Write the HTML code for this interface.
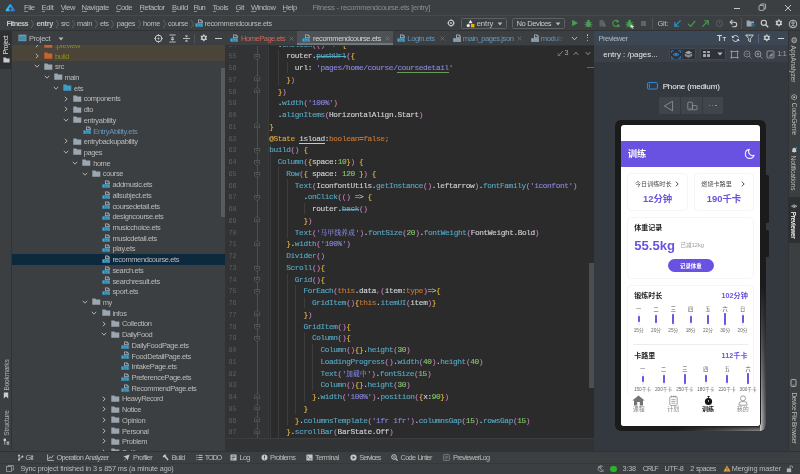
<!DOCTYPE html>
<html lang="en"><head><meta charset="utf-8"><title>Fitness - recommendcourse.ets [entry]</title>
<style>
*{margin:0;padding:0;box-sizing:border-box}
html,body{width:800px;height:474px;overflow:hidden;background:#3c3f41}
body{position:relative;font-family:"Liberation Sans","Noto Sans CJK SC",sans-serif;font-size:7px;color:#bbb}
body div,body span,body svg{position:absolute}
#root{left:0;top:0;width:800px;height:474px;overflow:hidden;will-change:transform}
span{white-space:pre;display:block}
span i{font-style:normal}
.code{font-family:"Liberation Mono","Noto Serif CJK SC",monospace;font-size:7.8px;line-height:11.75px;color:#d0d2d6}
.code i{position:static}
.zh{font-family:"Noto Serif CJK SC",serif;font-size:6.5px;line-height:0}
.code{-webkit-text-stroke:0.12px currentColor}
.cj{font-family:"Liberation Sans","Noto Sans CJK SC",sans-serif}
</style></head>
<body>
<div id="root">
<div style="left:0px;top:0px;width:800px;height:474px;background:#3c3f41;"></div>
<div style="left:0px;top:0px;width:800px;height:15px;background:#3c3f41;"></div>
<svg style="left:5.4px;top:3px;" width="11" height="9" viewBox="0 0 11 9"><defs><linearGradient id="lg" x1="0" y1="0" x2="1" y2="0"><stop offset="0" stop-color="#30c8ea"/><stop offset="0.5" stop-color="#2aa2e6"/><stop offset="1" stop-color="#2b74de"/></linearGradient></defs><path d="M5.3 2 L8.9 7.3 H1.7 Z" fill="none" stroke="url(#lg)" stroke-width="2.1" stroke-linejoin="round"/><path d="M5.3 4.4 L6.5 5.9 H5.8 V8.6 H4.8 V5.9 H4.1 Z" fill="#3c3f41"/></svg>
<span style="left:24px;top:1.90px;font-size:7.6px;color:#bbbbbb;line-height:12px;letter-spacing:-0.437px;">File</span>
<div style="left:24px;top:11.2px;width:3.6px;height:0.5px;background:#8a8a8a"></div>
<span style="left:41.5px;top:1.90px;font-size:7.6px;color:#bbbbbb;line-height:12px;letter-spacing:-0.224px;">Edit</span>
<div style="left:41.5px;top:11.2px;width:3.6px;height:0.5px;background:#8a8a8a"></div>
<span style="left:60.7px;top:1.90px;font-size:7.6px;color:#bbbbbb;line-height:12px;letter-spacing:-0.509px;">View</span>
<div style="left:60.7px;top:11.2px;width:3.6px;height:0.5px;background:#8a8a8a"></div>
<span style="left:81.5px;top:1.90px;font-size:7.6px;color:#bbbbbb;line-height:12px;letter-spacing:-0.312px;">Navigate</span>
<div style="left:81.5px;top:11.2px;width:5px;height:0.5px;background:#8a8a8a"></div>
<span style="left:116px;top:1.90px;font-size:7.6px;color:#bbbbbb;line-height:12px;letter-spacing:-0.542px;">Code</span>
<div style="left:116px;top:11.2px;width:3.6px;height:0.5px;background:#8a8a8a"></div>
<span style="left:139.5px;top:1.90px;font-size:7.6px;color:#bbbbbb;line-height:12px;letter-spacing:-0.440px;">Refactor</span>
<div style="left:139.5px;top:11.2px;width:3.6px;height:0.5px;background:#8a8a8a"></div>
<span style="left:172px;top:1.90px;font-size:7.6px;color:#bbbbbb;line-height:12px;letter-spacing:-0.180px;">Build</span>
<div style="left:172px;top:11.2px;width:3.6px;height:0.5px;background:#8a8a8a"></div>
<span style="left:193.5px;top:1.90px;font-size:7.6px;color:#bbbbbb;line-height:12px;letter-spacing:-0.814px;">Run</span>
<div style="left:193.5px;top:11.2px;width:3.6px;height:0.5px;background:#8a8a8a"></div>
<span style="left:212.5px;top:1.90px;font-size:7.6px;color:#bbbbbb;line-height:12px;letter-spacing:-0.448px;">Tools</span>
<div style="left:212.5px;top:11.2px;width:3.6px;height:0.5px;background:#8a8a8a"></div>
<span style="left:235.5px;top:1.90px;font-size:7.6px;color:#bbbbbb;line-height:12px;letter-spacing:-0.404px;">Git</span>
<div style="left:235.5px;top:11.2px;width:3.6px;height:0.5px;background:#8a8a8a"></div>
<span style="left:251px;top:1.90px;font-size:7.6px;color:#bbbbbb;line-height:12px;letter-spacing:-0.422px;">Window</span>
<div style="left:251px;top:11.2px;width:5px;height:0.5px;background:#8a8a8a"></div>
<span style="left:282.5px;top:1.90px;font-size:7.6px;color:#bbbbbb;line-height:12px;letter-spacing:-0.283px;">Help</span>
<div style="left:282.5px;top:11.2px;width:3.6px;height:0.5px;background:#8a8a8a"></div>
<span style="left:312.5px;top:1.90px;font-size:7.6px;color:#8a8c8e;line-height:12px;letter-spacing:-0.358px;word-spacing:0.358px;">Fitness - recommendcourse.ets [entry]</span>
<div style="left:734px;top:7.5px;width:6px;height:0.8px;background:#c8c8c8;"></div>
<svg style="left:758px;top:3px;" width="9" height="9" viewBox="0 0 9 9"><rect x="1" y="2.4" width="5" height="5" rx="1" fill="none" stroke="#c8c8c8" stroke-width="0.8"/><path d="M2.6 2.4 V1.6 Q2.6 1 3.2 1 H7 Q7.6 1 7.6 1.6 V5.4 Q7.6 6 7 6 H6" fill="none" stroke="#c8c8c8" stroke-width="0.8"/></svg>
<svg style="left:783.5px;top:3.5px;" width="8" height="8" viewBox="0 0 8 8"><path d="M1 1 L7 7 M7 1 L1 7" stroke="#d0d0d0" stroke-width="0.9" fill="none"/></svg>
<div style="left:0px;top:15px;width:800px;height:15.5px;background:#3c3f41;"></div>
<div style="left:0px;top:14.5px;width:800px;height:0.8px;background:#474a4c;"></div>
<div style="left:0px;top:30.2px;width:800px;height:0.8px;background:#323232;"></div>
<span style="left:6.5px;top:17.90px;font-size:7.4px;color:#c4c4c4;line-height:12px;font-weight:bold;letter-spacing:-0.630px;">Fitness</span>
<span style="left:36.5px;top:17.90px;font-size:7.4px;color:#c4c4c4;line-height:12px;font-weight:bold;letter-spacing:-0.319px;">entry</span>
<span style="left:61px;top:17.90px;font-size:7.4px;color:#bbbbbb;line-height:12px;letter-spacing:-0.621px;">src</span>
<span style="left:77px;top:17.90px;font-size:7.4px;color:#bbbbbb;line-height:12px;letter-spacing:-0.260px;">main</span>
<span style="left:100px;top:17.90px;font-size:7.4px;color:#bbbbbb;line-height:12px;letter-spacing:-0.457px;">ets</span>
<span style="left:116.7px;top:17.90px;font-size:7.4px;color:#bbbbbb;line-height:12px;letter-spacing:-0.372px;">pages</span>
<span style="left:143px;top:17.90px;font-size:7.4px;color:#bbbbbb;line-height:12px;letter-spacing:-0.378px;">home</span>
<span style="left:168px;top:17.90px;font-size:7.4px;color:#bbbbbb;line-height:12px;letter-spacing:-0.368px;">course</span>
<svg style="left:29.5px;top:18.5px;" width="5" height="10" viewBox="0 0 5 10"><path d="M1.2 1 L3.6 5 L1.2 9" stroke="#787b7d" stroke-width="0.55" fill="none"/></svg>
<svg style="left:55px;top:18.5px;" width="5" height="10" viewBox="0 0 5 10"><path d="M1.2 1 L3.6 5 L1.2 9" stroke="#787b7d" stroke-width="0.55" fill="none"/></svg>
<svg style="left:71px;top:18.5px;" width="5" height="10" viewBox="0 0 5 10"><path d="M1.2 1 L3.6 5 L1.2 9" stroke="#787b7d" stroke-width="0.55" fill="none"/></svg>
<svg style="left:94px;top:18.5px;" width="5" height="10" viewBox="0 0 5 10"><path d="M1.2 1 L3.6 5 L1.2 9" stroke="#787b7d" stroke-width="0.55" fill="none"/></svg>
<svg style="left:110px;top:18.5px;" width="5" height="10" viewBox="0 0 5 10"><path d="M1.2 1 L3.6 5 L1.2 9" stroke="#787b7d" stroke-width="0.55" fill="none"/></svg>
<svg style="left:137px;top:18.5px;" width="5" height="10" viewBox="0 0 5 10"><path d="M1.2 1 L3.6 5 L1.2 9" stroke="#787b7d" stroke-width="0.55" fill="none"/></svg>
<svg style="left:162px;top:18.5px;" width="5" height="10" viewBox="0 0 5 10"><path d="M1.2 1 L3.6 5 L1.2 9" stroke="#787b7d" stroke-width="0.55" fill="none"/></svg>
<svg style="left:190px;top:18.5px;" width="5" height="10" viewBox="0 0 5 10"><path d="M1.2 1 L3.6 5 L1.2 9" stroke="#787b7d" stroke-width="0.55" fill="none"/></svg>
<span style="left:204.5px;top:17.90px;font-size:7.4px;color:#bbbbbb;line-height:12px;letter-spacing:-0.300px;">recommendcourse.ets</span>
<svg style="left:447.2px;top:19.4px;" width="8" height="8" viewBox="0 0 9 9"><circle cx="4.5" cy="4.5" r="3" fill="none" stroke="#c9c9c9" stroke-width="1.2"/><circle cx="4.5" cy="4.5" r="1" fill="#c9c9c9"/><path d="M4.5 0.3V2 M4.5 7V8.7 M0.3 4.5H2 M7 4.5H8.7" stroke="#c9c9c9" stroke-width="0.9"/></svg>
<div style="left:461.4px;top:17.5px;width:45.4px;height:11.2px;border:0.8px solid #5e6163;border-radius:1.6px;background:#3c3f41"></div>
<svg style="left:465.5px;top:18.6px;" width="9" height="9" viewBox="0 0 9 9"><path d="M4.5 0.8 L6.6 4.2 H2.4 Z" fill="#e8e8e8"/><circle cx="2.3" cy="6.6" r="1.7" fill="#e8e8e8"/><rect x="5" y="5" width="3.4" height="3.4" fill="#f0b400"/></svg>
<span style="left:476.7px;top:17.90px;font-size:7.6px;color:#c8c8c8;line-height:12px;letter-spacing:-0.039px;">entry</span>
<svg style="left:496.5px;top:21.6px;" width="6" height="4" viewBox="0 0 6 4"><path d="M0.6 0.6 H5.4 L3 3.6 Z" fill="#b8b8b8"/></svg>
<div style="left:511.6px;top:17.5px;width:53.1px;height:11.2px;border:0.8px solid #5e6163;border-radius:1.6px;background:#3c3f41"></div>
<span style="left:516.5px;top:17.90px;font-size:7.6px;color:#c8c8c8;line-height:12px;letter-spacing:-0.484px;word-spacing:0.484px;">No Devices</span>
<svg style="left:554.5px;top:21.6px;" width="6" height="4" viewBox="0 0 6 4"><path d="M0.6 0.6 H5.4 L3 3.6 Z" fill="#b8b8b8"/></svg>
<svg style="left:570.5px;top:19.3px;" width="8" height="8" viewBox="0 0 8 8"><path d="M1.2 0.8 L7 4 L1.2 7.2 Z" fill="#499c54"/></svg>
<svg style="left:583.5px;top:18.8px;" width="9" height="9" viewBox="0 0 9 9"><ellipse cx="4.5" cy="5.2" rx="2.4" ry="3" fill="#499c54"/><circle cx="4.5" cy="2" r="1.3" fill="#499c54"/><path d="M0.8 3.2 L2.4 4.2 M8.2 3.2 L6.6 4.2 M0.6 5.6 H2.2 M8.4 5.6 H6.8 M1 8.2 L2.4 7 M8 8.2 L6.6 7" stroke="#499c54" stroke-width="0.8"/></svg>
<svg style="left:597.5px;top:19px;" width="9" height="9" viewBox="0 0 9 9"><path d="M1.5 1 H5.5 V3 H7 V6 H5 V7.5 H1.5 Z" fill="#5e6163"/><path d="M5.5 5 L8.3 6.6 L5.5 8.2 Z" fill="#6e7173"/></svg>
<svg style="left:610.5px;top:19px;" width="10" height="9" viewBox="0 0 10 9"><path d="M6.8 2.2 A3 3 0 1 0 7.6 5.4" fill="none" stroke="#499c54" stroke-width="1.1"/><path d="M5.6 0.4 L8.4 2.4 L5.6 4 Z" fill="#499c54"/><path d="M6.5 5.2 L9.5 6.9 L6.5 8.6 Z" fill="#499c54"/></svg>
<svg style="left:624.5px;top:18.8px;" width="9" height="9" viewBox="0 0 9 9"><ellipse cx="4.5" cy="5.2" rx="2.4" ry="3" fill="#499c54"/><circle cx="4.5" cy="2" r="1.3" fill="#499c54"/><path d="M0.8 3.2 L2.4 4.2 M8.2 3.2 L6.6 4.2 M0.6 5.6 H2.2 M8.4 5.6 H6.8 M1 8.2 L2.4 7 M8 8.2 L6.6 7" stroke="#499c54" stroke-width="0.8"/></svg>
<svg style="left:630px;top:24px;" width="5" height="5" viewBox="0 0 5 5"><path d="M0.5 0.5 L4.5 2.5 L2.6 2.9 L3.6 4.6 L2.8 4.9 L1.9 3.2 L0.8 4.4 Z" fill="#e0e0e0"/></svg>
<div style="left:641px;top:21px;width:5.4px;height:5.4px;background:#616466;"></div>
<div style="left:652.3px;top:17.5px;width:0.7px;height:11.5px;background:#515456;"></div>
<span style="left:657.5px;top:17.80px;font-size:7.5px;color:#bbbbbb;line-height:12px;letter-spacing:-0.292px;">Git:</span>
<svg style="left:672.5px;top:18.8px;" width="9" height="9" viewBox="0 0 9 9"><path d="M7.6 1.4 L2 7 M1.8 3 V7.2 H6" stroke="#3592c4" stroke-width="1.1" fill="none"/></svg>
<svg style="left:686.5px;top:18.8px;" width="9" height="9" viewBox="0 0 9 9"><path d="M1 4.8 L3.6 7.4 L8.2 1.8" stroke="#499c54" stroke-width="1.2" fill="none"/></svg>
<svg style="left:700.5px;top:18.8px;" width="9" height="9" viewBox="0 0 9 9"><path d="M1.4 7.6 L7 2 M3 1.8 H7.2 V6" stroke="#499c54" stroke-width="1.1" fill="none"/></svg>
<svg style="left:714.5px;top:18.8px;" width="9" height="9" viewBox="0 0 9 9"><circle cx="4.5" cy="4.5" r="3.2" fill="none" stroke="#5e6163" stroke-width="0.9"/><path d="M4.5 2.4 V4.6 L6 5.6" stroke="#5e6163" stroke-width="0.8" fill="none"/></svg>
<svg style="left:728.5px;top:18.8px;" width="9" height="9" viewBox="0 0 9 9"><path d="M1.6 3.2 H5.4 A2.3 2.3 0 0 1 5.4 7.8 H3.2" fill="none" stroke="#c9c9c9" stroke-width="1.1"/><path d="M3.4 1 L1.2 3.2 L3.4 5.4" fill="none" stroke="#c9c9c9" stroke-width="1.1"/></svg>
<div style="left:741.3px;top:17.5px;width:0.7px;height:11.5px;background:#515456;"></div>
<svg style="left:746px;top:19px;" width="10" height="9" viewBox="0 0 10 9"><path d="M0.6 1.4 H3.6 L4.4 2.4 H8 V7.4 H0.6 Z" fill="#9aa7b0"/><rect x="5.6" y="4.2" width="3.6" height="4.2" fill="#3c3f41"/><rect x="6.2" y="4.8" width="1" height="1" fill="#3592c4"/><rect x="7.7" y="4.8" width="1" height="1" fill="#3592c4"/><rect x="6.2" y="6.4" width="1" height="1" fill="#3592c4"/><rect x="7.7" y="6.4" width="1" height="1" fill="#3592c4"/></svg>
<svg style="left:760px;top:18.8px;" width="9" height="9" viewBox="0 0 9 9"><circle cx="3.8" cy="3.8" r="2.6" fill="none" stroke="#d0d0d0" stroke-width="1.1"/><path d="M5.8 5.8 L8.2 8.2" stroke="#d0d0d0" stroke-width="1.3"/></svg>
<svg style="left:774.6px;top:19.4px;" width="7.8" height="7.8" viewBox="0 0 9 9"><circle cx="4.5" cy="4.5" r="2.3" fill="none" stroke="#d0d0d0" stroke-width="1.6"/><rect x="3.8" y="0.4" width="1.4" height="1.8" fill="#d0d0d0" transform="rotate(0 4.5 4.5)"/><rect x="3.8" y="0.4" width="1.4" height="1.8" fill="#d0d0d0" transform="rotate(60 4.5 4.5)"/><rect x="3.8" y="0.4" width="1.4" height="1.8" fill="#d0d0d0" transform="rotate(120 4.5 4.5)"/><rect x="3.8" y="0.4" width="1.4" height="1.8" fill="#d0d0d0" transform="rotate(180 4.5 4.5)"/><rect x="3.8" y="0.4" width="1.4" height="1.8" fill="#d0d0d0" transform="rotate(240 4.5 4.5)"/><rect x="3.8" y="0.4" width="1.4" height="1.8" fill="#d0d0d0" transform="rotate(300 4.5 4.5)"/></svg>
<svg style="left:787.5px;top:18.6px;" width="10" height="10" viewBox="0 0 10 10"><circle cx="5" cy="5" r="3.8" fill="none" stroke="#c9c9c9" stroke-width="0.9"/><circle cx="5" cy="4" r="1.2" fill="none" stroke="#c9c9c9" stroke-width="0.8"/><path d="M2.8 7.6 Q5 5 7.2 7.6" fill="none" stroke="#c9c9c9" stroke-width="0.8"/></svg>
<div style="left:0px;top:31px;width:11.5px;height:419px;background:#3c3f41;"></div>
<div style="left:11.2px;top:31px;width:0.8px;height:419px;background:#323232;"></div>
<div style="left:0px;top:31px;width:11.2px;height:37.5px;background:#2d2f30;"></div>
<span style="left:-2.95px;top:38.8px;width:18.50px;line-height:12px;font-size:6.8px;color:#e0e0e0;letter-spacing:-0.381px;transform:rotate(-90deg);transform-origin:50% 50%;">Project</span>
<svg style="left:2.6px;top:57.4px;" width="7" height="6" viewBox="0 0 7 6"><path d="M0.4 0.6 H2.8 L3.4 1.6 H6.6 V5.6 H0.4 Z" fill="#c9cdd0"/></svg>
<span style="left:-9.20px;top:368.8px;width:31.00px;line-height:12px;font-size:6.6px;color:#b4b4b4;letter-spacing:-0.223px;transform:rotate(-90deg);transform-origin:50% 50%;">Bookmarks</span>
<svg style="left:3px;top:392.4px;" width="6" height="7" viewBox="0 0 6 7"><path d="M0.8 0.5 H5.2 V6.5 L3 4.6 L0.8 6.5 Z" fill="#c9cdd0"/></svg>
<span style="left:-6.45px;top:417px;width:25.50px;line-height:12px;font-size:6.6px;color:#b4b4b4;letter-spacing:-0.142px;transform:rotate(-90deg);transform-origin:50% 50%;">Structure</span>
<svg style="left:2.8px;top:437.8px;" width="7" height="7" viewBox="0 0 7 7"><rect x="0.6" y="0.6" width="2.4" height="2.4" fill="#c9cdd0"/><rect x="3.6" y="3.6" width="2.6" height="1.2" fill="#c9cdd0"/><rect x="3.6" y="5.4" width="2.6" height="1.2" fill="#c9cdd0"/><rect x="1.4" y="3" width="0.8" height="3.6" fill="#c9cdd0"/></svg>
<div style="left:787.7px;top:31px;width:12.3px;height:419px;background:#3c3f41;"></div>
<div style="left:787.5px;top:31px;width:0.7px;height:419px;background:#323232;"></div>
<div style="left:12px;top:31px;width:213px;height:419px;background:#3c3f41;"></div>
<div style="left:12px;top:44px;width:213px;height:16.9px;background:#4a4538;"></div>
<svg style="left:194.6px;top:19.400000000000002px;" width="8.4" height="8.4" viewBox="0 0 8.4 8.4"><path d="M3 0.4 H6.2 L7.8 2 V4.4 H3 Z" fill="#a3acb2"/><path d="M3.9 1.3 H5.4 V2.2 H6.8 V3.2 H3.9 Z" fill="#3c3f41"/><rect x="0.1" y="4.1" width="8.2" height="3.9" fill="#2f7fa2"/><path d="M1.1 5.1 H2.6 M1.1 6.05 H2.4 M1.1 7 H2.6 M1.4 5.1 V7 M3.3 5.1 H5 M4.15 5.1 V7.2 M7.2 5.1 H5.8 V6.05 H7.1 V7 H5.7" stroke="#7fc0dc" stroke-width="0.4" fill="none"/></svg>
<svg style="left:34.0px;top:41.95px;" width="6" height="6" viewBox="0 0 6 6"><path d="M1.8 0.8 L4.2 3 L1.8 5.2" stroke="#b4b7b9" stroke-width="0.95" fill="none"/></svg>
<svg style="left:44.1px;top:41.35px;" width="9" height="7.2" viewBox="0 0 9 7.2"><path d="M0.3 0.5 H3.3 L4.2 1.6 H8.3 V6.7 H0.3 Z" fill="#c9622c"/></svg>
<span style="left:54.9px;top:39.85px;font-size:7.5px;color:#8c8b1e;line-height:12px;letter-spacing:-0.349px;">.preview</span>
<svg style="left:34.0px;top:52.664px;" width="6" height="6" viewBox="0 0 6 6"><path d="M1.8 0.8 L4.2 3 L1.8 5.2" stroke="#b4b7b9" stroke-width="0.95" fill="none"/></svg>
<svg style="left:44.1px;top:52.064px;" width="9" height="7.2" viewBox="0 0 9 7.2"><path d="M0.3 0.5 H3.3 L4.2 1.6 H8.3 V6.7 H0.3 Z" fill="#c9622c"/></svg>
<span style="left:54.9px;top:50.56px;font-size:7.5px;color:#8c8b1e;line-height:12px;letter-spacing:-0.317px;">build</span>
<svg style="left:34.0px;top:63.378px;" width="6" height="6" viewBox="0 0 6 6"><path d="M0.8 1.8 L3 4.2 L5.2 1.8" stroke="#b4b7b9" stroke-width="0.95" fill="none"/></svg>
<svg style="left:44.1px;top:62.778px;" width="9" height="7.2" viewBox="0 0 9 7.2"><path d="M0.3 0.5 H3.3 L4.2 1.6 H8.3 V6.7 H0.3 Z" fill="#9aa7b0"/></svg>
<span style="left:54.9px;top:61.28px;font-size:7.5px;color:#bbbbbb;line-height:12px;letter-spacing:-0.333px;">src</span>
<svg style="left:43.58px;top:74.09200000000001px;" width="6" height="6" viewBox="0 0 6 6"><path d="M0.8 1.8 L3 4.2 L5.2 1.8" stroke="#b4b7b9" stroke-width="0.95" fill="none"/></svg>
<svg style="left:53.68px;top:73.49200000000002px;" width="9" height="7.2" viewBox="0 0 9 7.2"><path d="M0.3 0.5 H3.3 L4.2 1.6 H8.3 V6.7 H0.3 Z" fill="#9aa7b0"/></svg>
<span style="left:64.47999999999999px;top:71.99px;font-size:7.5px;color:#bbbbbb;line-height:12px;letter-spacing:-0.406px;">main</span>
<svg style="left:53.16px;top:84.80600000000001px;" width="6" height="6" viewBox="0 0 6 6"><path d="M0.8 1.8 L3 4.2 L5.2 1.8" stroke="#b4b7b9" stroke-width="0.95" fill="none"/></svg>
<svg style="left:63.26px;top:84.20600000000002px;" width="9" height="7.2" viewBox="0 0 9 7.2"><path d="M0.3 0.5 H3.3 L4.2 1.6 H8.3 V6.7 H0.3 Z" fill="#3f9bc2"/></svg>
<span style="left:74.06px;top:82.71px;font-size:7.5px;color:#bbbbbb;line-height:12px;letter-spacing:-0.333px;">ets</span>
<svg style="left:62.74000000000001px;top:95.52000000000001px;" width="6" height="6" viewBox="0 0 6 6"><path d="M1.8 0.8 L4.2 3 L1.8 5.2" stroke="#b4b7b9" stroke-width="0.95" fill="none"/></svg>
<svg style="left:72.84px;top:94.92000000000002px;" width="9" height="7.2" viewBox="0 0 9 7.2"><path d="M0.3 0.5 H3.3 L4.2 1.6 H8.3 V6.7 H0.3 Z" fill="#9aa7b0"/></svg>
<span style="left:83.64000000000001px;top:93.42px;font-size:7.5px;color:#bbbbbb;line-height:12px;letter-spacing:-0.409px;">components</span>
<svg style="left:62.74000000000001px;top:106.23400000000001px;" width="6" height="6" viewBox="0 0 6 6"><path d="M1.8 0.8 L4.2 3 L1.8 5.2" stroke="#b4b7b9" stroke-width="0.95" fill="none"/></svg>
<svg style="left:72.84px;top:105.63400000000001px;" width="9" height="7.2" viewBox="0 0 9 7.2"><path d="M0.3 0.5 H3.3 L4.2 1.6 H8.3 V6.7 H0.3 Z" fill="#9aa7b0"/></svg>
<span style="left:83.64000000000001px;top:104.13px;font-size:7.5px;color:#bbbbbb;line-height:12px;letter-spacing:-0.348px;">dto</span>
<svg style="left:62.74000000000001px;top:116.94800000000001px;" width="6" height="6" viewBox="0 0 6 6"><path d="M0.8 1.8 L3 4.2 L5.2 1.8" stroke="#b4b7b9" stroke-width="0.95" fill="none"/></svg>
<svg style="left:72.84px;top:116.34800000000001px;" width="9" height="7.2" viewBox="0 0 9 7.2"><path d="M0.3 0.5 H3.3 L4.2 1.6 H8.3 V6.7 H0.3 Z" fill="#9aa7b0"/></svg>
<span style="left:83.64000000000001px;top:114.85px;font-size:7.5px;color:#bbbbbb;line-height:12px;letter-spacing:-0.299px;">entryability</span>
<svg style="left:82.82px;top:126.462px;" width="8.4" height="8.4" viewBox="0 0 8.4 8.4"><path d="M3 0.4 H6.2 L7.8 2 V4.4 H3 Z" fill="#a3acb2"/><path d="M3.9 1.3 H5.4 V2.2 H6.8 V3.2 H3.9 Z" fill="#3c3f41"/><rect x="0.1" y="4.1" width="8.2" height="3.9" fill="#2f7fa2"/><path d="M1.1 5.1 H2.6 M1.1 6.05 H2.4 M1.1 7 H2.6 M1.4 5.1 V7 M3.3 5.1 H5 M4.15 5.1 V7.2 M7.2 5.1 H5.8 V6.05 H7.1 V7 H5.7" stroke="#7fc0dc" stroke-width="0.4" fill="none"/></svg>
<span style="left:93.22px;top:125.56px;font-size:7.5px;color:#6897bb;line-height:12px;letter-spacing:-0.307px;">EntryAbility.ets</span>
<svg style="left:62.74000000000001px;top:138.376px;" width="6" height="6" viewBox="0 0 6 6"><path d="M1.8 0.8 L4.2 3 L1.8 5.2" stroke="#b4b7b9" stroke-width="0.95" fill="none"/></svg>
<svg style="left:72.84px;top:137.776px;" width="9" height="7.2" viewBox="0 0 9 7.2"><path d="M0.3 0.5 H3.3 L4.2 1.6 H8.3 V6.7 H0.3 Z" fill="#9aa7b0"/></svg>
<span style="left:83.64000000000001px;top:136.28px;font-size:7.5px;color:#bbbbbb;line-height:12px;letter-spacing:-0.334px;">entrybackupability</span>
<svg style="left:62.74000000000001px;top:149.09px;" width="6" height="6" viewBox="0 0 6 6"><path d="M0.8 1.8 L3 4.2 L5.2 1.8" stroke="#b4b7b9" stroke-width="0.95" fill="none"/></svg>
<svg style="left:72.84px;top:148.49px;" width="9" height="7.2" viewBox="0 0 9 7.2"><path d="M0.3 0.5 H3.3 L4.2 1.6 H8.3 V6.7 H0.3 Z" fill="#9aa7b0"/></svg>
<span style="left:83.64000000000001px;top:146.99px;font-size:7.5px;color:#bbbbbb;line-height:12px;letter-spacing:-0.409px;">pages</span>
<svg style="left:72.32px;top:159.804px;" width="6" height="6" viewBox="0 0 6 6"><path d="M0.8 1.8 L3 4.2 L5.2 1.8" stroke="#b4b7b9" stroke-width="0.95" fill="none"/></svg>
<svg style="left:82.41999999999999px;top:159.204px;" width="9" height="7.2" viewBox="0 0 9 7.2"><path d="M0.3 0.5 H3.3 L4.2 1.6 H8.3 V6.7 H0.3 Z" fill="#9aa7b0"/></svg>
<span style="left:93.22px;top:157.70px;font-size:7.5px;color:#bbbbbb;line-height:12px;letter-spacing:-0.469px;">home</span>
<svg style="left:81.9px;top:170.51800000000003px;" width="6" height="6" viewBox="0 0 6 6"><path d="M0.8 1.8 L3 4.2 L5.2 1.8" stroke="#b4b7b9" stroke-width="0.95" fill="none"/></svg>
<svg style="left:92.0px;top:169.91800000000003px;" width="9" height="7.2" viewBox="0 0 9 7.2"><path d="M0.3 0.5 H3.3 L4.2 1.6 H8.3 V6.7 H0.3 Z" fill="#9aa7b0"/></svg>
<span style="left:102.80000000000001px;top:168.42px;font-size:7.5px;color:#bbbbbb;line-height:12px;letter-spacing:-0.375px;">course</span>
<svg style="left:101.98px;top:180.03200000000004px;" width="8.4" height="8.4" viewBox="0 0 8.4 8.4"><path d="M3 0.4 H6.2 L7.8 2 V4.4 H3 Z" fill="#a3acb2"/><path d="M3.9 1.3 H5.4 V2.2 H6.8 V3.2 H3.9 Z" fill="#3c3f41"/><rect x="0.1" y="4.1" width="8.2" height="3.9" fill="#2f7fa2"/><path d="M1.1 5.1 H2.6 M1.1 6.05 H2.4 M1.1 7 H2.6 M1.4 5.1 V7 M3.3 5.1 H5 M4.15 5.1 V7.2 M7.2 5.1 H5.8 V6.05 H7.1 V7 H5.7" stroke="#7fc0dc" stroke-width="0.4" fill="none"/></svg>
<span style="left:112.38px;top:179.13px;font-size:7.5px;color:#bbbbbb;line-height:12px;letter-spacing:-0.368px;">addmusic.ets</span>
<svg style="left:101.98px;top:190.74600000000004px;" width="8.4" height="8.4" viewBox="0 0 8.4 8.4"><path d="M3 0.4 H6.2 L7.8 2 V4.4 H3 Z" fill="#a3acb2"/><path d="M3.9 1.3 H5.4 V2.2 H6.8 V3.2 H3.9 Z" fill="#3c3f41"/><rect x="0.1" y="4.1" width="8.2" height="3.9" fill="#2f7fa2"/><path d="M1.1 5.1 H2.6 M1.1 6.05 H2.4 M1.1 7 H2.6 M1.4 5.1 V7 M3.3 5.1 H5 M4.15 5.1 V7.2 M7.2 5.1 H5.8 V6.05 H7.1 V7 H5.7" stroke="#7fc0dc" stroke-width="0.4" fill="none"/></svg>
<span style="left:112.38px;top:189.85px;font-size:7.5px;color:#bbbbbb;line-height:12px;letter-spacing:-0.310px;">allsubject.ets</span>
<svg style="left:101.98px;top:201.46000000000004px;" width="8.4" height="8.4" viewBox="0 0 8.4 8.4"><path d="M3 0.4 H6.2 L7.8 2 V4.4 H3 Z" fill="#a3acb2"/><path d="M3.9 1.3 H5.4 V2.2 H6.8 V3.2 H3.9 Z" fill="#3c3f41"/><rect x="0.1" y="4.1" width="8.2" height="3.9" fill="#2f7fa2"/><path d="M1.1 5.1 H2.6 M1.1 6.05 H2.4 M1.1 7 H2.6 M1.4 5.1 V7 M3.3 5.1 H5 M4.15 5.1 V7.2 M7.2 5.1 H5.8 V6.05 H7.1 V7 H5.7" stroke="#7fc0dc" stroke-width="0.4" fill="none"/></svg>
<span style="left:112.38px;top:200.56px;font-size:7.5px;color:#bbbbbb;line-height:12px;letter-spacing:-0.328px;">coursedetail.ets</span>
<svg style="left:101.98px;top:212.17400000000004px;" width="8.4" height="8.4" viewBox="0 0 8.4 8.4"><path d="M3 0.4 H6.2 L7.8 2 V4.4 H3 Z" fill="#a3acb2"/><path d="M3.9 1.3 H5.4 V2.2 H6.8 V3.2 H3.9 Z" fill="#3c3f41"/><rect x="0.1" y="4.1" width="8.2" height="3.9" fill="#2f7fa2"/><path d="M1.1 5.1 H2.6 M1.1 6.05 H2.4 M1.1 7 H2.6 M1.4 5.1 V7 M3.3 5.1 H5 M4.15 5.1 V7.2 M7.2 5.1 H5.8 V6.05 H7.1 V7 H5.7" stroke="#7fc0dc" stroke-width="0.4" fill="none"/></svg>
<span style="left:112.38px;top:211.27px;font-size:7.5px;color:#bbbbbb;line-height:12px;letter-spacing:-0.354px;">designcourse.ets</span>
<svg style="left:101.98px;top:222.88800000000003px;" width="8.4" height="8.4" viewBox="0 0 8.4 8.4"><path d="M3 0.4 H6.2 L7.8 2 V4.4 H3 Z" fill="#a3acb2"/><path d="M3.9 1.3 H5.4 V2.2 H6.8 V3.2 H3.9 Z" fill="#3c3f41"/><rect x="0.1" y="4.1" width="8.2" height="3.9" fill="#2f7fa2"/><path d="M1.1 5.1 H2.6 M1.1 6.05 H2.4 M1.1 7 H2.6 M1.4 5.1 V7 M3.3 5.1 H5 M4.15 5.1 V7.2 M7.2 5.1 H5.8 V6.05 H7.1 V7 H5.7" stroke="#7fc0dc" stroke-width="0.4" fill="none"/></svg>
<span style="left:112.38px;top:221.99px;font-size:7.5px;color:#bbbbbb;line-height:12px;letter-spacing:-0.356px;">musicchoice.ets</span>
<svg style="left:101.98px;top:233.60200000000003px;" width="8.4" height="8.4" viewBox="0 0 8.4 8.4"><path d="M3 0.4 H6.2 L7.8 2 V4.4 H3 Z" fill="#a3acb2"/><path d="M3.9 1.3 H5.4 V2.2 H6.8 V3.2 H3.9 Z" fill="#3c3f41"/><rect x="0.1" y="4.1" width="8.2" height="3.9" fill="#2f7fa2"/><path d="M1.1 5.1 H2.6 M1.1 6.05 H2.4 M1.1 7 H2.6 M1.4 5.1 V7 M3.3 5.1 H5 M4.15 5.1 V7.2 M7.2 5.1 H5.8 V6.05 H7.1 V7 H5.7" stroke="#7fc0dc" stroke-width="0.4" fill="none"/></svg>
<span style="left:112.38px;top:232.70px;font-size:7.5px;color:#bbbbbb;line-height:12px;letter-spacing:-0.331px;">musicdetail.ets</span>
<svg style="left:101.98px;top:244.31600000000003px;" width="8.4" height="8.4" viewBox="0 0 8.4 8.4"><path d="M3 0.4 H6.2 L7.8 2 V4.4 H3 Z" fill="#a3acb2"/><path d="M3.9 1.3 H5.4 V2.2 H6.8 V3.2 H3.9 Z" fill="#3c3f41"/><rect x="0.1" y="4.1" width="8.2" height="3.9" fill="#2f7fa2"/><path d="M1.1 5.1 H2.6 M1.1 6.05 H2.4 M1.1 7 H2.6 M1.4 5.1 V7 M3.3 5.1 H5 M4.15 5.1 V7.2 M7.2 5.1 H5.8 V6.05 H7.1 V7 H5.7" stroke="#7fc0dc" stroke-width="0.4" fill="none"/></svg>
<span style="left:112.38px;top:243.42px;font-size:7.5px;color:#bbbbbb;line-height:12px;letter-spacing:-0.316px;">play.ets</span>
<div style="left:12px;top:253.87300000000002px;width:213px;height:10.714px;background:#0d293e;"></div>
<svg style="left:101.98px;top:255.03000000000003px;" width="8.4" height="8.4" viewBox="0 0 8.4 8.4"><path d="M3 0.4 H6.2 L7.8 2 V4.4 H3 Z" fill="#a3acb2"/><path d="M3.9 1.3 H5.4 V2.2 H6.8 V3.2 H3.9 Z" fill="#3c3f41"/><rect x="0.1" y="4.1" width="8.2" height="3.9" fill="#2f7fa2"/><path d="M1.1 5.1 H2.6 M1.1 6.05 H2.4 M1.1 7 H2.6 M1.4 5.1 V7 M3.3 5.1 H5 M4.15 5.1 V7.2 M7.2 5.1 H5.8 V6.05 H7.1 V7 H5.7" stroke="#7fc0dc" stroke-width="0.4" fill="none"/></svg>
<span style="left:112.38px;top:254.13px;font-size:7.5px;color:#bbbbbb;line-height:12px;letter-spacing:-0.391px;">recommendcourse.ets</span>
<svg style="left:101.98px;top:265.744px;" width="8.4" height="8.4" viewBox="0 0 8.4 8.4"><path d="M3 0.4 H6.2 L7.8 2 V4.4 H3 Z" fill="#a3acb2"/><path d="M3.9 1.3 H5.4 V2.2 H6.8 V3.2 H3.9 Z" fill="#3c3f41"/><rect x="0.1" y="4.1" width="8.2" height="3.9" fill="#2f7fa2"/><path d="M1.1 5.1 H2.6 M1.1 6.05 H2.4 M1.1 7 H2.6 M1.4 5.1 V7 M3.3 5.1 H5 M4.15 5.1 V7.2 M7.2 5.1 H5.8 V6.05 H7.1 V7 H5.7" stroke="#7fc0dc" stroke-width="0.4" fill="none"/></svg>
<span style="left:112.38px;top:264.84px;font-size:7.5px;color:#bbbbbb;line-height:12px;letter-spacing:-0.346px;">search.ets</span>
<svg style="left:101.98px;top:276.458px;" width="8.4" height="8.4" viewBox="0 0 8.4 8.4"><path d="M3 0.4 H6.2 L7.8 2 V4.4 H3 Z" fill="#a3acb2"/><path d="M3.9 1.3 H5.4 V2.2 H6.8 V3.2 H3.9 Z" fill="#3c3f41"/><rect x="0.1" y="4.1" width="8.2" height="3.9" fill="#2f7fa2"/><path d="M1.1 5.1 H2.6 M1.1 6.05 H2.4 M1.1 7 H2.6 M1.4 5.1 V7 M3.3 5.1 H5 M4.15 5.1 V7.2 M7.2 5.1 H5.8 V6.05 H7.1 V7 H5.7" stroke="#7fc0dc" stroke-width="0.4" fill="none"/></svg>
<span style="left:112.38px;top:275.56px;font-size:7.5px;color:#bbbbbb;line-height:12px;letter-spacing:-0.331px;">searchresult.ets</span>
<svg style="left:101.98px;top:287.172px;" width="8.4" height="8.4" viewBox="0 0 8.4 8.4"><path d="M3 0.4 H6.2 L7.8 2 V4.4 H3 Z" fill="#a3acb2"/><path d="M3.9 1.3 H5.4 V2.2 H6.8 V3.2 H3.9 Z" fill="#3c3f41"/><rect x="0.1" y="4.1" width="8.2" height="3.9" fill="#2f7fa2"/><path d="M1.1 5.1 H2.6 M1.1 6.05 H2.4 M1.1 7 H2.6 M1.4 5.1 V7 M3.3 5.1 H5 M4.15 5.1 V7.2 M7.2 5.1 H5.8 V6.05 H7.1 V7 H5.7" stroke="#7fc0dc" stroke-width="0.4" fill="none"/></svg>
<span style="left:112.38px;top:286.27px;font-size:7.5px;color:#bbbbbb;line-height:12px;letter-spacing:-0.320px;">sport.ets</span>
<svg style="left:81.9px;top:299.086px;" width="6" height="6" viewBox="0 0 6 6"><path d="M0.8 1.8 L3 4.2 L5.2 1.8" stroke="#b4b7b9" stroke-width="0.95" fill="none"/></svg>
<svg style="left:92.0px;top:298.486px;" width="9" height="7.2" viewBox="0 0 9 7.2"><path d="M0.3 0.5 H3.3 L4.2 1.6 H8.3 V6.7 H0.3 Z" fill="#9aa7b0"/></svg>
<span style="left:102.80000000000001px;top:296.99px;font-size:7.5px;color:#bbbbbb;line-height:12px;letter-spacing:-0.500px;">my</span>
<svg style="left:91.48px;top:309.8px;" width="6" height="6" viewBox="0 0 6 6"><path d="M0.8 1.8 L3 4.2 L5.2 1.8" stroke="#b4b7b9" stroke-width="0.95" fill="none"/></svg>
<svg style="left:101.58px;top:309.2px;" width="9" height="7.2" viewBox="0 0 9 7.2"><path d="M0.3 0.5 H3.3 L4.2 1.6 H8.3 V6.7 H0.3 Z" fill="#9aa7b0"/></svg>
<span style="left:112.38px;top:307.70px;font-size:7.5px;color:#bbbbbb;line-height:12px;letter-spacing:-0.317px;">infos</span>
<svg style="left:101.06px;top:320.514px;" width="6" height="6" viewBox="0 0 6 6"><path d="M1.8 0.8 L4.2 3 L1.8 5.2" stroke="#b4b7b9" stroke-width="0.95" fill="none"/></svg>
<svg style="left:111.16px;top:319.914px;" width="9" height="7.2" viewBox="0 0 9 7.2"><path d="M0.3 0.5 H3.3 L4.2 1.6 H8.3 V6.7 H0.3 Z" fill="#9aa7b0"/></svg>
<span style="left:121.96000000000001px;top:318.41px;font-size:7.5px;color:#bbbbbb;line-height:12px;letter-spacing:-0.329px;">Collection</span>
<svg style="left:101.06px;top:331.228px;" width="6" height="6" viewBox="0 0 6 6"><path d="M0.8 1.8 L3 4.2 L5.2 1.8" stroke="#b4b7b9" stroke-width="0.95" fill="none"/></svg>
<svg style="left:111.16px;top:330.628px;" width="9" height="7.2" viewBox="0 0 9 7.2"><path d="M0.3 0.5 H3.3 L4.2 1.6 H8.3 V6.7 H0.3 Z" fill="#9aa7b0"/></svg>
<span style="left:121.96000000000001px;top:329.13px;font-size:7.5px;color:#bbbbbb;line-height:12px;letter-spacing:-0.375px;">DailyFood</span>
<svg style="left:121.14px;top:340.742px;" width="8.4" height="8.4" viewBox="0 0 8.4 8.4"><path d="M3 0.4 H6.2 L7.8 2 V4.4 H3 Z" fill="#a3acb2"/><path d="M3.9 1.3 H5.4 V2.2 H6.8 V3.2 H3.9 Z" fill="#3c3f41"/><rect x="0.1" y="4.1" width="8.2" height="3.9" fill="#2f7fa2"/><path d="M1.1 5.1 H2.6 M1.1 6.05 H2.4 M1.1 7 H2.6 M1.4 5.1 V7 M3.3 5.1 H5 M4.15 5.1 V7.2 M7.2 5.1 H5.8 V6.05 H7.1 V7 H5.7" stroke="#7fc0dc" stroke-width="0.4" fill="none"/></svg>
<span style="left:131.54px;top:339.84px;font-size:7.5px;color:#bbbbbb;line-height:12px;letter-spacing:-0.373px;">DailyFoodPage.ets</span>
<svg style="left:121.14px;top:351.456px;" width="8.4" height="8.4" viewBox="0 0 8.4 8.4"><path d="M3 0.4 H6.2 L7.8 2 V4.4 H3 Z" fill="#a3acb2"/><path d="M3.9 1.3 H5.4 V2.2 H6.8 V3.2 H3.9 Z" fill="#3c3f41"/><rect x="0.1" y="4.1" width="8.2" height="3.9" fill="#2f7fa2"/><path d="M1.1 5.1 H2.6 M1.1 6.05 H2.4 M1.1 7 H2.6 M1.4 5.1 V7 M3.3 5.1 H5 M4.15 5.1 V7.2 M7.2 5.1 H5.8 V6.05 H7.1 V7 H5.7" stroke="#7fc0dc" stroke-width="0.4" fill="none"/></svg>
<span style="left:131.54px;top:350.56px;font-size:7.5px;color:#bbbbbb;line-height:12px;letter-spacing:-0.366px;">FoodDetailPage.ets</span>
<svg style="left:121.14px;top:362.17px;" width="8.4" height="8.4" viewBox="0 0 8.4 8.4"><path d="M3 0.4 H6.2 L7.8 2 V4.4 H3 Z" fill="#a3acb2"/><path d="M3.9 1.3 H5.4 V2.2 H6.8 V3.2 H3.9 Z" fill="#3c3f41"/><rect x="0.1" y="4.1" width="8.2" height="3.9" fill="#2f7fa2"/><path d="M1.1 5.1 H2.6 M1.1 6.05 H2.4 M1.1 7 H2.6 M1.4 5.1 V7 M3.3 5.1 H5 M4.15 5.1 V7.2 M7.2 5.1 H5.8 V6.05 H7.1 V7 H5.7" stroke="#7fc0dc" stroke-width="0.4" fill="none"/></svg>
<span style="left:131.54px;top:361.27px;font-size:7.5px;color:#bbbbbb;line-height:12px;letter-spacing:-0.357px;">IntakePage.ets</span>
<svg style="left:121.14px;top:372.884px;" width="8.4" height="8.4" viewBox="0 0 8.4 8.4"><path d="M3 0.4 H6.2 L7.8 2 V4.4 H3 Z" fill="#a3acb2"/><path d="M3.9 1.3 H5.4 V2.2 H6.8 V3.2 H3.9 Z" fill="#3c3f41"/><rect x="0.1" y="4.1" width="8.2" height="3.9" fill="#2f7fa2"/><path d="M1.1 5.1 H2.6 M1.1 6.05 H2.4 M1.1 7 H2.6 M1.4 5.1 V7 M3.3 5.1 H5 M4.15 5.1 V7.2 M7.2 5.1 H5.8 V6.05 H7.1 V7 H5.7" stroke="#7fc0dc" stroke-width="0.4" fill="none"/></svg>
<span style="left:131.54px;top:371.98px;font-size:7.5px;color:#bbbbbb;line-height:12px;letter-spacing:-0.368px;">PreferencePage.ets</span>
<svg style="left:121.14px;top:383.598px;" width="8.4" height="8.4" viewBox="0 0 8.4 8.4"><path d="M3 0.4 H6.2 L7.8 2 V4.4 H3 Z" fill="#a3acb2"/><path d="M3.9 1.3 H5.4 V2.2 H6.8 V3.2 H3.9 Z" fill="#3c3f41"/><rect x="0.1" y="4.1" width="8.2" height="3.9" fill="#2f7fa2"/><path d="M1.1 5.1 H2.6 M1.1 6.05 H2.4 M1.1 7 H2.6 M1.4 5.1 V7 M3.3 5.1 H5 M4.15 5.1 V7.2 M7.2 5.1 H5.8 V6.05 H7.1 V7 H5.7" stroke="#7fc0dc" stroke-width="0.4" fill="none"/></svg>
<span style="left:131.54px;top:382.70px;font-size:7.5px;color:#bbbbbb;line-height:12px;letter-spacing:-0.424px;">RecommendPage.ets</span>
<svg style="left:101.06px;top:395.512px;" width="6" height="6" viewBox="0 0 6 6"><path d="M1.8 0.8 L4.2 3 L1.8 5.2" stroke="#b4b7b9" stroke-width="0.95" fill="none"/></svg>
<svg style="left:111.16px;top:394.912px;" width="9" height="7.2" viewBox="0 0 9 7.2"><path d="M0.3 0.5 H3.3 L4.2 1.6 H8.3 V6.7 H0.3 Z" fill="#9aa7b0"/></svg>
<span style="left:121.96000000000001px;top:393.41px;font-size:7.5px;color:#bbbbbb;line-height:12px;letter-spacing:-0.413px;">HeavyRecord</span>
<svg style="left:101.06px;top:406.226px;" width="6" height="6" viewBox="0 0 6 6"><path d="M1.8 0.8 L4.2 3 L1.8 5.2" stroke="#b4b7b9" stroke-width="0.95" fill="none"/></svg>
<svg style="left:111.16px;top:405.626px;" width="9" height="7.2" viewBox="0 0 9 7.2"><path d="M0.3 0.5 H3.3 L4.2 1.6 H8.3 V6.7 H0.3 Z" fill="#9aa7b0"/></svg>
<span style="left:121.96000000000001px;top:404.13px;font-size:7.5px;color:#bbbbbb;line-height:12px;letter-spacing:-0.354px;">Notice</span>
<svg style="left:101.06px;top:416.94px;" width="6" height="6" viewBox="0 0 6 6"><path d="M1.8 0.8 L4.2 3 L1.8 5.2" stroke="#b4b7b9" stroke-width="0.95" fill="none"/></svg>
<svg style="left:111.16px;top:416.34px;" width="9" height="7.2" viewBox="0 0 9 7.2"><path d="M0.3 0.5 H3.3 L4.2 1.6 H8.3 V6.7 H0.3 Z" fill="#9aa7b0"/></svg>
<span style="left:121.96000000000001px;top:414.84px;font-size:7.5px;color:#bbbbbb;line-height:12px;letter-spacing:-0.369px;">Opinion</span>
<svg style="left:101.06px;top:427.654px;" width="6" height="6" viewBox="0 0 6 6"><path d="M1.8 0.8 L4.2 3 L1.8 5.2" stroke="#b4b7b9" stroke-width="0.95" fill="none"/></svg>
<svg style="left:111.16px;top:427.054px;" width="9" height="7.2" viewBox="0 0 9 7.2"><path d="M0.3 0.5 H3.3 L4.2 1.6 H8.3 V6.7 H0.3 Z" fill="#9aa7b0"/></svg>
<span style="left:121.96000000000001px;top:425.55px;font-size:7.5px;color:#bbbbbb;line-height:12px;letter-spacing:-0.370px;">Personal</span>
<svg style="left:101.06px;top:438.368px;" width="6" height="6" viewBox="0 0 6 6"><path d="M1.8 0.8 L4.2 3 L1.8 5.2" stroke="#b4b7b9" stroke-width="0.95" fill="none"/></svg>
<svg style="left:111.16px;top:437.768px;" width="9" height="7.2" viewBox="0 0 9 7.2"><path d="M0.3 0.5 H3.3 L4.2 1.6 H8.3 V6.7 H0.3 Z" fill="#9aa7b0"/></svg>
<span style="left:121.96000000000001px;top:436.27px;font-size:7.5px;color:#bbbbbb;line-height:12px;letter-spacing:-0.399px;">Problem</span>
<svg style="left:101.06px;top:449.082px;" width="6" height="6" viewBox="0 0 6 6"><path d="M1.8 0.8 L4.2 3 L1.8 5.2" stroke="#b4b7b9" stroke-width="0.95" fill="none"/></svg>
<svg style="left:111.16px;top:448.48199999999997px;" width="9" height="7.2" viewBox="0 0 9 7.2"><path d="M0.3 0.5 H3.3 L4.2 1.6 H8.3 V6.7 H0.3 Z" fill="#9aa7b0"/></svg>
<span style="left:121.96000000000001px;top:446.98px;font-size:7.5px;color:#bbbbbb;line-height:12px;letter-spacing:-0.334px;">Setting</span>
<div style="left:220.5px;top:68px;width:4.1px;height:149px;background:#5d6062;opacity:0.85"></div>
<div style="left:12px;top:31px;width:213px;height:13.7px;background:#3c3f41;"></div>
<svg style="left:18.3px;top:34.4px;" width="9" height="8" viewBox="0 0 9 8"><rect x="0.4" y="0.6" width="8" height="6.6" fill="#87939b"/><rect x="1.2" y="2.2" width="6.4" height="4.2" fill="#3592b8"/></svg>
<span style="left:28.9px;top:32.70px;font-size:7.6px;color:#bbbbbb;line-height:12px;letter-spacing:-0.308px;">Project</span>
<svg style="left:58px;top:36.8px;" width="6" height="4" viewBox="0 0 6 4"><path d="M0.6 0.6 H5.4 L3 3.6 Z" fill="#b8b8b8"/></svg>
<svg style="left:153.5px;top:33.8px;" width="9" height="9" viewBox="0 0 9 9"><circle cx="4.5" cy="4.5" r="3.3" fill="none" stroke="#c9c9c9" stroke-width="1"/><circle cx="4.5" cy="4.5" r="0.9" fill="#c9c9c9"/><path d="M4.5 0.2V2.2 M4.5 6.8V8.8 M0.2 4.5H2.2 M6.8 4.5H8.8" stroke="#c9c9c9" stroke-width="0.9"/></svg>
<svg style="left:167.5px;top:33.8px;" width="9" height="9" viewBox="0 0 9 9"><path d="M1.4 1 H7.6 M1.4 8 H7.6" stroke="#c9c9c9" stroke-width="0.9"/><path d="M4.5 2.4 L6.4 4.4 H2.6 Z M4.5 6.8 L6.4 4.9 H2.6 Z" fill="#c9c9c9"/></svg>
<svg style="left:181.5px;top:33.8px;" width="9" height="9" viewBox="0 0 9 9"><path d="M1 4.5 H8" stroke="#c9c9c9" stroke-width="0.9"/><path d="M4.5 3.6 L6.2 1.4 H2.8 Z M4.5 5.4 L6.2 7.6 H2.8 Z" fill="#c9c9c9"/></svg>
<div style="left:194.3px;top:33.5px;width:0.7px;height:9.5px;background:#515456;"></div>
<svg style="left:199.8px;top:34.4px;" width="7.6" height="7.6" viewBox="0 0 9 9"><circle cx="4.5" cy="4.5" r="2.3" fill="none" stroke="#d0d0d0" stroke-width="1.6"/><rect x="3.8" y="0.4" width="1.4" height="1.8" fill="#d0d0d0" transform="rotate(0 4.5 4.5)"/><rect x="3.8" y="0.4" width="1.4" height="1.8" fill="#d0d0d0" transform="rotate(60 4.5 4.5)"/><rect x="3.8" y="0.4" width="1.4" height="1.8" fill="#d0d0d0" transform="rotate(120 4.5 4.5)"/><rect x="3.8" y="0.4" width="1.4" height="1.8" fill="#d0d0d0" transform="rotate(180 4.5 4.5)"/><rect x="3.8" y="0.4" width="1.4" height="1.8" fill="#d0d0d0" transform="rotate(240 4.5 4.5)"/><rect x="3.8" y="0.4" width="1.4" height="1.8" fill="#d0d0d0" transform="rotate(300 4.5 4.5)"/></svg>
<div style="left:215px;top:37.8px;width:6.5px;height:0.9px;background:#c9c9c9;"></div>
<div style="left:225px;top:31px;width:369.1px;height:14px;background:#3c3f41;"></div>
<div style="left:225px;top:44.7px;width:369.1px;height:393.5px;background:#2b2b2b;"></div>
<div style="left:225px;top:44.7px;width:43.5px;height:393.5px;background:#313335;"></div>
<div style="left:268.3px;top:44.7px;width:0.6px;height:393.5px;background:#3a3a3a;"></div>
<div style="left:225px;top:438.2px;width:369.1px;height:12.8px;background:#313335;"></div>
<div style="left:225px;top:438px;width:369.1px;height:0.7px;background:#3b3d3f;"></div>
<div style="left:225px;top:44.7px;width:369.1px;height:393.5px;overflow:hidden">
<div style="left:32.39999999999998px;top:0;width:0.6px;height:393.5px;background:#4c4f51"></div>
<div style="left:53.05px;top:5.12px;width:0.6px;height:35.25px;background:#3d3d3d"></div>
<div style="left:61.60px;top:16.88px;width:0.6px;height:11.75px;background:#3d3d3d"></div>
<div style="left:44.50px;top:99.12px;width:0.6px;height:293.75px;background:#3d3d3d"></div>
<div style="left:53.05px;top:122.62px;width:0.6px;height:270.25px;background:#3d3d3d"></div>
<div style="left:61.60px;top:134.38px;width:0.6px;height:58.75px;background:#3d3d3d"></div>
<div style="left:78.71px;top:157.88px;width:0.6px;height:11.75px;background:#3d3d3d"></div>
<div style="left:61.60px;top:228.38px;width:0.6px;height:152.75px;background:#3d3d3d"></div>
<div style="left:70.16px;top:240.12px;width:0.6px;height:129.25px;background:#3d3d3d"></div>
<div style="left:78.71px;top:251.88px;width:0.6px;height:11.75px;background:#3d3d3d"></div>
<div style="left:78.71px;top:287.12px;width:0.6px;height:70.50px;background:#3d3d3d"></div>
<div style="left:87.26px;top:298.88px;width:0.6px;height:47.00px;background:#3d3d3d"></div>
<span style="left:3.5999999999999943px;top:-5.12px;line-height:11.75px;font-size:6.9px;font-family:'Liberation Mono',monospace;color:#5c5f62;letter-spacing:-0.291px">54</span>
<span class="code" style="left:44.20px;top:-5.12px;letter-spacing:-0.405px">  .<i style="color:#57a8c4">onClick</i><i style="color:#c77dbb">(</i><i style="color:#c77dbb">(</i><i style="color:#c77dbb">)</i> =&gt; <i style="color:#e3b341">{</i></span>
<span style="left:3.5999999999999943px;top:6.62px;line-height:11.75px;font-size:6.9px;font-family:'Liberation Mono',monospace;color:#5c5f62;letter-spacing:-0.291px">55</span>
<span class="code" style="left:44.20px;top:6.62px;letter-spacing:-0.405px">    router.<i style="color:#57a8c4;text-decoration:line-through;text-decoration-thickness:0.4px">pushUrl</i><i style="color:#c77dbb">(</i><i style="color:#e3b341">{</i></span>
<svg style="left:29.400000000000006px;top:9.40px" width="6.2" height="6.2" viewBox="0 0 7 7"><path d="M0.6 0.6 H6.4 V4 L3.5 6.4 L0.6 4 Z" fill="#313335" stroke="#6e7072" stroke-width="0.6"/><path d="M2.2 2.6 H4.8" stroke="#8a8c8e" stroke-width="0.6"/></svg>
<span style="left:3.5999999999999943px;top:18.38px;line-height:11.75px;font-size:6.9px;font-family:'Liberation Mono',monospace;color:#5c5f62;letter-spacing:-0.291px">56</span>
<span class="code" style="left:44.20px;top:18.38px;letter-spacing:-0.405px">      url: <i style="color:#8b86e0">'pages/home/course/<i style="border-bottom:0.6px solid #6a9a58">coursedetail</i>'</i></span>
<span style="left:3.5999999999999943px;top:30.12px;line-height:11.75px;font-size:6.9px;font-family:'Liberation Mono',monospace;color:#5c5f62;letter-spacing:-0.291px">57</span>
<span class="code" style="left:44.20px;top:30.12px;letter-spacing:-0.405px">    <i style="color:#e3b341">}</i><i style="color:#c77dbb">)</i></span>
<svg style="left:29.400000000000006px;top:30.80px" width="6.2" height="6.2" viewBox="0 0 7 7"><path d="M0.6 6.4 H6.4 V3 L3.5 0.6 L0.6 3 Z" fill="#313335" stroke="#6e7072" stroke-width="0.6"/><path d="M2.2 4.4 H4.8" stroke="#8a8c8e" stroke-width="0.6"/></svg>
<span style="left:3.5999999999999943px;top:41.88px;line-height:11.75px;font-size:6.9px;font-family:'Liberation Mono',monospace;color:#5c5f62;letter-spacing:-0.291px">58</span>
<span class="code" style="left:44.20px;top:41.88px;letter-spacing:-0.405px">  <i style="color:#e3b341">}</i><i style="color:#c77dbb">)</i></span>
<svg style="left:29.400000000000006px;top:42.55px" width="6.2" height="6.2" viewBox="0 0 7 7"><path d="M0.6 6.4 H6.4 V3 L3.5 0.6 L0.6 3 Z" fill="#313335" stroke="#6e7072" stroke-width="0.6"/><path d="M2.2 4.4 H4.8" stroke="#8a8c8e" stroke-width="0.6"/></svg>
<span style="left:3.5999999999999943px;top:53.62px;line-height:11.75px;font-size:6.9px;font-family:'Liberation Mono',monospace;color:#5c5f62;letter-spacing:-0.291px">59</span>
<span class="code" style="left:44.20px;top:53.62px;letter-spacing:-0.405px">  .<i style="color:#57a8c4">width</i><i style="color:#c77dbb">(</i><i style="color:#8b86e0">&#x27;100%&#x27;</i><i style="color:#c77dbb">)</i></span>
<span style="left:3.5999999999999943px;top:65.38px;line-height:11.75px;font-size:6.9px;font-family:'Liberation Mono',monospace;color:#5c5f62;letter-spacing:-0.291px">60</span>
<span class="code" style="left:44.20px;top:65.38px;letter-spacing:-0.405px">  .<i style="color:#57a8c4">alignItems</i><i style="color:#c77dbb">(</i>HorizontalAlign.Start<i style="color:#c77dbb">)</i></span>
<span style="left:3.5999999999999943px;top:77.12px;line-height:11.75px;font-size:6.9px;font-family:'Liberation Mono',monospace;color:#5c5f62;letter-spacing:-0.291px">61</span>
<span class="code" style="left:44.20px;top:77.12px;letter-spacing:-0.405px"><i style="color:#e3b341">}</i></span>
<svg style="left:29.400000000000006px;top:77.80px" width="6.2" height="6.2" viewBox="0 0 7 7"><path d="M0.6 6.4 H6.4 V3 L3.5 0.6 L0.6 3 Z" fill="#313335" stroke="#6e7072" stroke-width="0.6"/><path d="M2.2 4.4 H4.8" stroke="#8a8c8e" stroke-width="0.6"/></svg>
<span style="left:3.5999999999999943px;top:88.87px;line-height:11.75px;font-size:6.9px;font-family:'Liberation Mono',monospace;color:#5c5f62;letter-spacing:-0.291px">62</span>
<span class="code" style="left:44.20px;top:88.87px;letter-spacing:-0.405px"><i style="color:#d9a441">@State</i> <i style="border-bottom:0.6px solid #c8c8c8">isload</i>:<i style="color:#cc7832">boolean</i>=<i style="color:#cc7832">false</i><i style="color:#cc7832">;</i></span>
<span style="left:3.5999999999999943px;top:100.62px;line-height:11.75px;font-size:6.9px;font-family:'Liberation Mono',monospace;color:#5c5f62;letter-spacing:-0.291px">63</span>
<span class="code" style="left:44.20px;top:100.62px;letter-spacing:-0.405px"><i style="color:#57a8c4">build</i><i style="color:#c77dbb">(</i><i style="color:#c77dbb">)</i> <i style="color:#e3b341">{</i></span>
<svg style="left:29.400000000000006px;top:103.40px" width="6.2" height="6.2" viewBox="0 0 7 7"><path d="M0.6 0.6 H6.4 V4 L3.5 6.4 L0.6 4 Z" fill="#313335" stroke="#6e7072" stroke-width="0.6"/><path d="M2.2 2.6 H4.8" stroke="#8a8c8e" stroke-width="0.6"/></svg>
<span style="left:3.5999999999999943px;top:112.37px;line-height:11.75px;font-size:6.9px;font-family:'Liberation Mono',monospace;color:#5c5f62;letter-spacing:-0.291px">64</span>
<span class="code" style="left:44.20px;top:112.37px;letter-spacing:-0.405px">  <i style="color:#57a8c4">Column</i><i style="color:#c77dbb">(</i><i style="color:#e3b341">{</i>space:<i style="color:#86c66e">10</i><i style="color:#e3b341">}</i><i style="color:#c77dbb">)</i> <i style="color:#e3b341">{</i></span>
<svg style="left:29.400000000000006px;top:115.15px" width="6.2" height="6.2" viewBox="0 0 7 7"><path d="M0.6 0.6 H6.4 V4 L3.5 6.4 L0.6 4 Z" fill="#313335" stroke="#6e7072" stroke-width="0.6"/><path d="M2.2 2.6 H4.8" stroke="#8a8c8e" stroke-width="0.6"/></svg>
<span style="left:3.5999999999999943px;top:124.12px;line-height:11.75px;font-size:6.9px;font-family:'Liberation Mono',monospace;color:#5c5f62;letter-spacing:-0.291px">65</span>
<span class="code" style="left:44.20px;top:124.12px;letter-spacing:-0.405px">    <i style="color:#57a8c4">Row</i><i style="color:#c77dbb">(</i><i style="color:#e3b341">{</i> space: <i style="color:#86c66e">120</i> <i style="color:#e3b341">}</i><i style="color:#c77dbb">)</i> <i style="color:#e3b341">{</i></span>
<svg style="left:29.400000000000006px;top:126.90px" width="6.2" height="6.2" viewBox="0 0 7 7"><path d="M0.6 0.6 H6.4 V4 L3.5 6.4 L0.6 4 Z" fill="#313335" stroke="#6e7072" stroke-width="0.6"/><path d="M2.2 2.6 H4.8" stroke="#8a8c8e" stroke-width="0.6"/></svg>
<span style="left:3.5999999999999943px;top:135.88px;line-height:11.75px;font-size:6.9px;font-family:'Liberation Mono',monospace;color:#5c5f62;letter-spacing:-0.291px">66</span>
<span class="code" style="left:44.20px;top:135.88px;letter-spacing:-0.405px">      <i style="color:#57a8c4">Text</i><i style="color:#c77dbb">(</i>IconfontUtils.<i style="color:#57a8c4">getInstance</i><i style="color:#c77dbb">(</i><i style="color:#c77dbb">)</i>.leftarrow<i style="color:#c77dbb">)</i>.<i style="color:#57a8c4">fontFamily</i><i style="color:#c77dbb">(</i><i style="color:#8b86e0">&#x27;iconfont&#x27;</i><i style="color:#c77dbb">)</i></span>
<span style="left:3.5999999999999943px;top:147.62px;line-height:11.75px;font-size:6.9px;font-family:'Liberation Mono',monospace;color:#5c5f62;letter-spacing:-0.291px">67</span>
<span class="code" style="left:44.20px;top:147.62px;letter-spacing:-0.405px">        .<i style="color:#57a8c4">onClick</i><i style="color:#c77dbb">(</i><i style="color:#c77dbb">(</i><i style="color:#c77dbb">)</i> =&gt; <i style="color:#e3b341">{</i></span>
<svg style="left:29.400000000000006px;top:150.40px" width="6.2" height="6.2" viewBox="0 0 7 7"><path d="M0.6 0.6 H6.4 V4 L3.5 6.4 L0.6 4 Z" fill="#313335" stroke="#6e7072" stroke-width="0.6"/><path d="M2.2 2.6 H4.8" stroke="#8a8c8e" stroke-width="0.6"/></svg>
<span style="left:3.5999999999999943px;top:159.38px;line-height:11.75px;font-size:6.9px;font-family:'Liberation Mono',monospace;color:#5c5f62;letter-spacing:-0.291px">68</span>
<span class="code" style="left:44.20px;top:159.38px;letter-spacing:-0.405px">          router.<i style="color:#57a8c4;text-decoration:line-through;text-decoration-thickness:0.4px">back</i><i style="color:#c77dbb">(</i><i style="color:#c77dbb">)</i></span>
<span style="left:3.5999999999999943px;top:171.12px;line-height:11.75px;font-size:6.9px;font-family:'Liberation Mono',monospace;color:#5c5f62;letter-spacing:-0.291px">69</span>
<span class="code" style="left:44.20px;top:171.12px;letter-spacing:-0.405px">        <i style="color:#e3b341">}</i><i style="color:#c77dbb">)</i></span>
<svg style="left:29.400000000000006px;top:171.80px" width="6.2" height="6.2" viewBox="0 0 7 7"><path d="M0.6 6.4 H6.4 V3 L3.5 0.6 L0.6 3 Z" fill="#313335" stroke="#6e7072" stroke-width="0.6"/><path d="M2.2 4.4 H4.8" stroke="#8a8c8e" stroke-width="0.6"/></svg>
<span style="left:3.5999999999999943px;top:182.88px;line-height:11.75px;font-size:6.9px;font-family:'Liberation Mono',monospace;color:#5c5f62;letter-spacing:-0.291px">70</span>
<span class="code" style="left:44.20px;top:182.88px;letter-spacing:-0.405px">      <i style="color:#57a8c4">Text</i><i style="color:#c77dbb">(</i><i style="color:#8b86e0">'<i class="zh" style="letter-spacing:0.450px">马甲线养成</i>'</i><i style="color:#c77dbb">)</i>.<i style="color:#57a8c4">fontSize</i><i style="color:#c77dbb">(</i><i style="color:#86c66e">20</i><i style="color:#c77dbb">)</i>.<i style="color:#57a8c4">fontWeight</i><i style="color:#c77dbb">(</i>FontWeight.Bold<i style="color:#c77dbb">)</i></span>
<span style="left:3.5999999999999943px;top:194.62px;line-height:11.75px;font-size:6.9px;font-family:'Liberation Mono',monospace;color:#5c5f62;letter-spacing:-0.291px">71</span>
<span class="code" style="left:44.20px;top:194.62px;letter-spacing:-0.405px">    <i style="color:#e3b341">}</i>.<i style="color:#57a8c4">width</i><i style="color:#c77dbb">(</i><i style="color:#8b86e0">&#x27;100%&#x27;</i><i style="color:#c77dbb">)</i></span>
<svg style="left:29.400000000000006px;top:195.30px" width="6.2" height="6.2" viewBox="0 0 7 7"><path d="M0.6 6.4 H6.4 V3 L3.5 0.6 L0.6 3 Z" fill="#313335" stroke="#6e7072" stroke-width="0.6"/><path d="M2.2 4.4 H4.8" stroke="#8a8c8e" stroke-width="0.6"/></svg>
<span style="left:3.5999999999999943px;top:206.38px;line-height:11.75px;font-size:6.9px;font-family:'Liberation Mono',monospace;color:#5c5f62;letter-spacing:-0.291px">72</span>
<span class="code" style="left:44.20px;top:206.38px;letter-spacing:-0.405px">    <i style="color:#57a8c4">Divider</i><i style="color:#c77dbb">(</i><i style="color:#c77dbb">)</i></span>
<span style="left:3.5999999999999943px;top:218.12px;line-height:11.75px;font-size:6.9px;font-family:'Liberation Mono',monospace;color:#5c5f62;letter-spacing:-0.291px">73</span>
<span class="code" style="left:44.20px;top:218.12px;letter-spacing:-0.405px">    <i style="color:#57a8c4">Scroll</i><i style="color:#c77dbb">(</i><i style="color:#c77dbb">)</i><i style="color:#e3b341">{</i></span>
<svg style="left:29.400000000000006px;top:220.90px" width="6.2" height="6.2" viewBox="0 0 7 7"><path d="M0.6 0.6 H6.4 V4 L3.5 6.4 L0.6 4 Z" fill="#313335" stroke="#6e7072" stroke-width="0.6"/><path d="M2.2 2.6 H4.8" stroke="#8a8c8e" stroke-width="0.6"/></svg>
<span style="left:3.5999999999999943px;top:229.88px;line-height:11.75px;font-size:6.9px;font-family:'Liberation Mono',monospace;color:#5c5f62;letter-spacing:-0.291px">74</span>
<span class="code" style="left:44.20px;top:229.88px;letter-spacing:-0.405px">      <i style="color:#57a8c4">Grid</i><i style="color:#c77dbb">(</i><i style="color:#c77dbb">)</i><i style="color:#e3b341">{</i></span>
<svg style="left:29.400000000000006px;top:232.65px" width="6.2" height="6.2" viewBox="0 0 7 7"><path d="M0.6 0.6 H6.4 V4 L3.5 6.4 L0.6 4 Z" fill="#313335" stroke="#6e7072" stroke-width="0.6"/><path d="M2.2 2.6 H4.8" stroke="#8a8c8e" stroke-width="0.6"/></svg>
<span style="left:3.5999999999999943px;top:241.62px;line-height:11.75px;font-size:6.9px;font-family:'Liberation Mono',monospace;color:#5c5f62;letter-spacing:-0.291px">75</span>
<span class="code" style="left:44.20px;top:241.62px;letter-spacing:-0.405px">        <i style="color:#57a8c4">ForEach</i><i style="color:#c77dbb">(</i><i style="color:#cc7832">this</i>.data<i style="color:#cc7832">,</i><i style="color:#c77dbb">(</i>item:<i style="color:#cc7832">type</i><i style="color:#c77dbb">)</i>=&gt;<i style="color:#e3b341">{</i></span>
<svg style="left:29.400000000000006px;top:244.40px" width="6.2" height="6.2" viewBox="0 0 7 7"><path d="M0.6 0.6 H6.4 V4 L3.5 6.4 L0.6 4 Z" fill="#313335" stroke="#6e7072" stroke-width="0.6"/><path d="M2.2 2.6 H4.8" stroke="#8a8c8e" stroke-width="0.6"/></svg>
<span style="left:3.5999999999999943px;top:253.38px;line-height:11.75px;font-size:6.9px;font-family:'Liberation Mono',monospace;color:#5c5f62;letter-spacing:-0.291px">76</span>
<span class="code" style="left:44.20px;top:253.38px;letter-spacing:-0.405px">          <i style="color:#57a8c4">GridItem</i><i style="color:#c77dbb">(</i><i style="color:#c77dbb">)</i><i style="color:#e3b341">{</i><i style="color:#cc7832">this</i>.<i style="color:#57a8c4">itemUI</i><i style="color:#c77dbb">(</i>item<i style="color:#c77dbb">)</i><i style="color:#e3b341">}</i></span>
<span style="left:3.5999999999999943px;top:265.12px;line-height:11.75px;font-size:6.9px;font-family:'Liberation Mono',monospace;color:#5c5f62;letter-spacing:-0.291px">77</span>
<span class="code" style="left:44.20px;top:265.12px;letter-spacing:-0.405px">        <i style="color:#e3b341">}</i><i style="color:#c77dbb">)</i></span>
<svg style="left:29.400000000000006px;top:265.80px" width="6.2" height="6.2" viewBox="0 0 7 7"><path d="M0.6 6.4 H6.4 V3 L3.5 0.6 L0.6 3 Z" fill="#313335" stroke="#6e7072" stroke-width="0.6"/><path d="M2.2 4.4 H4.8" stroke="#8a8c8e" stroke-width="0.6"/></svg>
<span style="left:3.5999999999999943px;top:276.88px;line-height:11.75px;font-size:6.9px;font-family:'Liberation Mono',monospace;color:#5c5f62;letter-spacing:-0.291px">78</span>
<span class="code" style="left:44.20px;top:276.88px;letter-spacing:-0.405px">        <i style="color:#57a8c4">GridItem</i><i style="color:#c77dbb">(</i><i style="color:#c77dbb">)</i><i style="color:#e3b341">{</i></span>
<svg style="left:29.400000000000006px;top:279.65px" width="6.2" height="6.2" viewBox="0 0 7 7"><path d="M0.6 0.6 H6.4 V4 L3.5 6.4 L0.6 4 Z" fill="#313335" stroke="#6e7072" stroke-width="0.6"/><path d="M2.2 2.6 H4.8" stroke="#8a8c8e" stroke-width="0.6"/></svg>
<span style="left:3.5999999999999943px;top:288.62px;line-height:11.75px;font-size:6.9px;font-family:'Liberation Mono',monospace;color:#5c5f62;letter-spacing:-0.291px">79</span>
<span class="code" style="left:44.20px;top:288.62px;letter-spacing:-0.405px">          <i style="color:#57a8c4">Column</i><i style="color:#c77dbb">(</i><i style="color:#c77dbb">)</i><i style="color:#e3b341">{</i></span>
<svg style="left:29.400000000000006px;top:291.40px" width="6.2" height="6.2" viewBox="0 0 7 7"><path d="M0.6 0.6 H6.4 V4 L3.5 6.4 L0.6 4 Z" fill="#313335" stroke="#6e7072" stroke-width="0.6"/><path d="M2.2 2.6 H4.8" stroke="#8a8c8e" stroke-width="0.6"/></svg>
<span style="left:3.5999999999999943px;top:300.38px;line-height:11.75px;font-size:6.9px;font-family:'Liberation Mono',monospace;color:#5c5f62;letter-spacing:-0.291px">80</span>
<span class="code" style="left:44.20px;top:300.38px;letter-spacing:-0.405px">            <i style="color:#57a8c4">Column</i><i style="color:#c77dbb">(</i><i style="color:#c77dbb">)</i><i style="color:#e3b341">{</i><i style="color:#e3b341">}</i>.<i style="color:#57a8c4">height</i><i style="color:#c77dbb">(</i><i style="color:#86c66e">30</i><i style="color:#c77dbb">)</i></span>
<span style="left:3.5999999999999943px;top:312.12px;line-height:11.75px;font-size:6.9px;font-family:'Liberation Mono',monospace;color:#5c5f62;letter-spacing:-0.291px">81</span>
<span class="code" style="left:44.20px;top:312.12px;letter-spacing:-0.405px">            <i style="color:#57a8c4">LoadingProgress</i><i style="color:#c77dbb">(</i><i style="color:#c77dbb">)</i>.<i style="color:#57a8c4">width</i><i style="color:#c77dbb">(</i><i style="color:#86c66e">40</i><i style="color:#c77dbb">)</i>.<i style="color:#57a8c4">height</i><i style="color:#c77dbb">(</i><i style="color:#86c66e">40</i><i style="color:#c77dbb">)</i></span>
<span style="left:3.5999999999999943px;top:323.88px;line-height:11.75px;font-size:6.9px;font-family:'Liberation Mono',monospace;color:#5c5f62;letter-spacing:-0.291px">82</span>
<span class="code" style="left:44.20px;top:323.88px;letter-spacing:-0.405px">            <i style="color:#57a8c4">Text</i><i style="color:#c77dbb">(</i><i style="color:#8b86e0">'<i class="zh" style="letter-spacing:0.450px">加载中</i>'</i><i style="color:#c77dbb">)</i>.<i style="color:#57a8c4">fontSize</i><i style="color:#c77dbb">(</i><i style="color:#86c66e">15</i><i style="color:#c77dbb">)</i></span>
<span style="left:3.5999999999999943px;top:335.62px;line-height:11.75px;font-size:6.9px;font-family:'Liberation Mono',monospace;color:#5c5f62;letter-spacing:-0.291px">83</span>
<span class="code" style="left:44.20px;top:335.62px;letter-spacing:-0.405px">            <i style="color:#57a8c4">Column</i><i style="color:#c77dbb">(</i><i style="color:#c77dbb">)</i><i style="color:#e3b341">{</i><i style="color:#e3b341">}</i>.<i style="color:#57a8c4">height</i><i style="color:#c77dbb">(</i><i style="color:#86c66e">30</i><i style="color:#c77dbb">)</i></span>
<span style="left:3.5999999999999943px;top:347.38px;line-height:11.75px;font-size:6.9px;font-family:'Liberation Mono',monospace;color:#5c5f62;letter-spacing:-0.291px">84</span>
<span class="code" style="left:44.20px;top:347.38px;letter-spacing:-0.405px">          <i style="color:#e3b341">}</i>.<i style="color:#57a8c4">width</i><i style="color:#c77dbb">(</i><i style="color:#8b86e0">&#x27;100%&#x27;</i><i style="color:#c77dbb">)</i>.<i style="color:#57a8c4">position</i><i style="color:#c77dbb">(</i><i style="color:#e3b341">{</i>x:<i style="color:#86c66e">90</i><i style="color:#e3b341">}</i><i style="color:#c77dbb">)</i></span>
<svg style="left:29.400000000000006px;top:348.05px" width="6.2" height="6.2" viewBox="0 0 7 7"><path d="M0.6 6.4 H6.4 V3 L3.5 0.6 L0.6 3 Z" fill="#313335" stroke="#6e7072" stroke-width="0.6"/><path d="M2.2 4.4 H4.8" stroke="#8a8c8e" stroke-width="0.6"/></svg>
<span style="left:3.5999999999999943px;top:359.12px;line-height:11.75px;font-size:6.9px;font-family:'Liberation Mono',monospace;color:#5c5f62;letter-spacing:-0.291px">85</span>
<span class="code" style="left:44.20px;top:359.12px;letter-spacing:-0.405px">        <i style="color:#e3b341">}</i></span>
<svg style="left:29.400000000000006px;top:359.80px" width="6.2" height="6.2" viewBox="0 0 7 7"><path d="M0.6 6.4 H6.4 V3 L3.5 0.6 L0.6 3 Z" fill="#313335" stroke="#6e7072" stroke-width="0.6"/><path d="M2.2 4.4 H4.8" stroke="#8a8c8e" stroke-width="0.6"/></svg>
<span style="left:3.5999999999999943px;top:370.88px;line-height:11.75px;font-size:6.9px;font-family:'Liberation Mono',monospace;color:#5c5f62;letter-spacing:-0.291px">86</span>
<span class="code" style="left:44.20px;top:370.88px;letter-spacing:-0.405px">      <i style="color:#e3b341">}</i>.<i style="color:#57a8c4">columnsTemplate</i><i style="color:#c77dbb">(</i><i style="color:#8b86e0">&#x27;1fr 1fr&#x27;</i><i style="color:#c77dbb">)</i>.<i style="color:#57a8c4">columnsGap</i><i style="color:#c77dbb">(</i><i style="color:#86c66e">15</i><i style="color:#c77dbb">)</i>.<i style="color:#57a8c4">rowsGap</i><i style="color:#c77dbb">(</i><i style="color:#86c66e">15</i><i style="color:#c77dbb">)</i></span>
<svg style="left:29.400000000000006px;top:371.55px" width="6.2" height="6.2" viewBox="0 0 7 7"><path d="M0.6 6.4 H6.4 V3 L3.5 0.6 L0.6 3 Z" fill="#313335" stroke="#6e7072" stroke-width="0.6"/><path d="M2.2 4.4 H4.8" stroke="#8a8c8e" stroke-width="0.6"/></svg>
<span style="left:3.5999999999999943px;top:382.62px;line-height:11.75px;font-size:6.9px;font-family:'Liberation Mono',monospace;color:#5c5f62;letter-spacing:-0.291px">87</span>
<span class="code" style="left:44.20px;top:382.62px;letter-spacing:-0.405px">    <i style="color:#e3b341">}</i>.<i style="color:#57a8c4">scrollBar</i><i style="color:#c77dbb">(</i>BarState.Off<i style="color:#c77dbb">)</i></span>
<svg style="left:29.400000000000006px;top:383.30px" width="6.2" height="6.2" viewBox="0 0 7 7"><path d="M0.6 6.4 H6.4 V3 L3.5 0.6 L0.6 3 Z" fill="#313335" stroke="#6e7072" stroke-width="0.6"/><path d="M2.2 4.4 H4.8" stroke="#8a8c8e" stroke-width="0.6"/></svg>
<svg style="left:331.6px;top:5.299999999999997px" width="6.8" height="6" viewBox="0 0 8 7"><path d="M0.8 3.6 L2.8 5.6 L7 1" stroke="#5fad65" stroke-width="1" fill="none"/><path d="M0.6 6.4 H4" stroke="#5fad65" stroke-width="0.8"/></svg>
<span style="left:339.6px;top:2.6999999999999957px;line-height:12px;font-size:7.2px;color:#a8aaac">3</span>
<svg style="left:348.29999999999995px;top:6.099999999999994px" width="6" height="5" viewBox="0 0 6 5"><path d="M0.8 3.8 L3 1.4 L5.2 3.8" stroke="#b0b2b4" stroke-width="0.8" fill="none"/></svg>
<svg style="left:359.5px;top:6.5px" width="6" height="5" viewBox="0 0 6 5"><path d="M0.8 1.2 L3 3.6 L5.2 1.2" stroke="#b0b2b4" stroke-width="0.8" fill="none"/></svg>
<div style="left:361.6px;top:22.200000000000003px;width:7.6px;height:1.3px;background:#12a012"></div>
<div style="left:363.70000000000005px;top:218.7px;width:5.2px;height:124.3px;background:#505355;opacity:0.9"></div>
</div>
<div style="left:296.8px;top:31px;width:95.8px;height:13.9px;background:#4e5254;"></div>
<div style="left:296.8px;top:43.3px;width:95.8px;height:1.6px;background:#70777d;"></div>
<svg style="left:230px;top:34.099999999999994px;" width="8.4" height="8.4" viewBox="0 0 8.4 8.4"><path d="M3 0.4 H6.2 L7.8 2 V4.4 H3 Z" fill="#a3acb2"/><path d="M3.9 1.3 H5.4 V2.2 H6.8 V3.2 H3.9 Z" fill="#3c3f41"/><rect x="0.1" y="4.1" width="8.2" height="3.9" fill="#2f7fa2"/><path d="M1.1 5.1 H2.6 M1.1 6.05 H2.4 M1.1 7 H2.6 M1.4 5.1 V7 M3.3 5.1 H5 M4.15 5.1 V7.2 M7.2 5.1 H5.8 V6.05 H7.1 V7 H5.7" stroke="#7fc0dc" stroke-width="0.4" fill="none"/></svg>
<span style="left:241px;top:32.50px;font-size:7.6px;color:#d1675a;line-height:12px;letter-spacing:-0.523px;">HomePage.ets</span>
<svg style="left:288.9px;top:35.5px;" width="5" height="5" viewBox="0 0 5 5"><path d="M0.6 0.6 L4.4 4.4 M4.4 0.6 L0.6 4.4" stroke="#7e8183" stroke-width="0.6" fill="none"/></svg>
<svg style="left:302px;top:34.099999999999994px;" width="8.4" height="8.4" viewBox="0 0 8.4 8.4"><path d="M3 0.4 H6.2 L7.8 2 V4.4 H3 Z" fill="#a3acb2"/><path d="M3.9 1.3 H5.4 V2.2 H6.8 V3.2 H3.9 Z" fill="#3c3f41"/><rect x="0.1" y="4.1" width="8.2" height="3.9" fill="#2f7fa2"/><path d="M1.1 5.1 H2.6 M1.1 6.05 H2.4 M1.1 7 H2.6 M1.4 5.1 V7 M3.3 5.1 H5 M4.15 5.1 V7.2 M7.2 5.1 H5.8 V6.05 H7.1 V7 H5.7" stroke="#7fc0dc" stroke-width="0.4" fill="none"/></svg>
<span style="left:313px;top:32.50px;font-size:7.6px;color:#d4d6d8;line-height:12px;letter-spacing:-0.378px;">recommendcourse.ets</span>
<svg style="left:384.8px;top:35.5px;" width="5" height="5" viewBox="0 0 5 5"><path d="M0.6 0.6 L4.4 4.4 M4.4 0.6 L0.6 4.4" stroke="#7e8183" stroke-width="0.6" fill="none"/></svg>
<svg style="left:396.6px;top:34.099999999999994px;" width="8.4" height="8.4" viewBox="0 0 8.4 8.4"><path d="M3 0.4 H6.2 L7.8 2 V4.4 H3 Z" fill="#a3acb2"/><path d="M3.9 1.3 H5.4 V2.2 H6.8 V3.2 H3.9 Z" fill="#3c3f41"/><rect x="0.1" y="4.1" width="8.2" height="3.9" fill="#2f7fa2"/><path d="M1.1 5.1 H2.6 M1.1 6.05 H2.4 M1.1 7 H2.6 M1.4 5.1 V7 M3.3 5.1 H5 M4.15 5.1 V7.2 M7.2 5.1 H5.8 V6.05 H7.1 V7 H5.7" stroke="#7fc0dc" stroke-width="0.4" fill="none"/></svg>
<span style="left:407.3px;top:32.50px;font-size:7.6px;color:#6897bb;line-height:12px;letter-spacing:-0.372px;">Login.ets</span>
<svg style="left:439.5px;top:35.5px;" width="5" height="5" viewBox="0 0 5 5"><path d="M0.6 0.6 L4.4 4.4 M4.4 0.6 L0.6 4.4" stroke="#7e8183" stroke-width="0.6" fill="none"/></svg>
<svg style="left:452.6px;top:34.099999999999994px;" width="8.4" height="8.4" viewBox="0 0 8.4 8.4"><path d="M3 0.4 H6.2 L7.8 2 V4.4 H3 Z" fill="#a3acb2"/><path d="M3.9 1.3 H5.4 V2.2 H6.8 V3.2 H3.9 Z" fill="#3c3f41"/><rect x="0.1" y="4.1" width="8.2" height="3.9" fill="#87939b"/><path d="M1.1 5.1 H2.6 M1.1 6.05 H2.4 M1.1 7 H2.6 M1.4 5.1 V7 M3.3 5.1 H5 M4.15 5.1 V7.2 M7.2 5.1 H5.8 V6.05 H7.1 V7 H5.7" stroke="#7fc0dc" stroke-width="0.4" fill="none"/></svg>
<span style="left:462.8px;top:32.50px;font-size:7.6px;color:#6897bb;line-height:12px;letter-spacing:-0.451px;">main_pages.json</span>
<svg style="left:517.0px;top:35.5px;" width="5" height="5" viewBox="0 0 5 5"><path d="M0.6 0.6 L4.4 4.4 M4.4 0.6 L0.6 4.4" stroke="#7e8183" stroke-width="0.6" fill="none"/></svg>
<svg style="left:530.8px;top:34.099999999999994px;" width="8.4" height="8.4" viewBox="0 0 8.4 8.4"><path d="M3 0.4 H6.2 L7.8 2 V4.4 H3 Z" fill="#a3acb2"/><path d="M3.9 1.3 H5.4 V2.2 H6.8 V3.2 H3.9 Z" fill="#3c3f41"/><rect x="0.1" y="4.1" width="8.2" height="3.9" fill="#87939b"/><path d="M1.1 5.1 H2.6 M1.1 6.05 H2.4 M1.1 7 H2.6 M1.4 5.1 V7 M3.3 5.1 H5 M4.15 5.1 V7.2 M7.2 5.1 H5.8 V6.05 H7.1 V7 H5.7" stroke="#7fc0dc" stroke-width="0.4" fill="none"/></svg>
<span style="left:540.8px;top:32.50px;font-size:7.6px;color:#6897bb;line-height:12px;letter-spacing:-0.421px;">module</span>
<div style="left:553px;top:32px;width:13px;height:12px;background:linear-gradient(to right,rgba(60,63,65,0),#3c3f41 85%)"></div>
<svg style="left:571px;top:35.8px;" width="7" height="5" viewBox="0 0 7 5"><path d="M1 1 L3.5 3.8 L6 1" stroke="#c4c6c8" stroke-width="0.9" fill="none"/></svg>
<div style="left:587.2px;top:34.4px;width:1.3px;height:1.3px;background:#c4c6c8;border-radius:1px"></div>
<div style="left:587.2px;top:37.1px;width:1.3px;height:1.3px;background:#c4c6c8;border-radius:1px"></div>
<div style="left:587.2px;top:39.8px;width:1.3px;height:1.3px;background:#c4c6c8;border-radius:1px"></div>
<div style="left:225px;top:44.5px;width:369.1px;height:0.5px;background:#323232;"></div>
<div style="left:594.1px;top:31px;width:193.60000000000002px;height:420px;background:#34383f;"></div>
<div style="left:594.1px;top:31px;width:193.60000000000002px;height:14px;background:#3b4754;"></div>
<div style="left:594.1px;top:44.7px;width:193.60000000000002px;height:17.8px;background:#3b3f47;"></div>
<span style="left:598.5px;top:32.60px;font-size:7.6px;color:#b4b8bc;line-height:12px;letter-spacing:-0.532px;">Previewer</span>
<span style="left:717px;top:32.00px;font-size:8.4px;color:#d0d2d4;line-height:12px;font-weight:bold;">T</span>
<span style="left:722.6px;top:32.80px;font-size:6px;color:#d0d2d4;line-height:12px;font-weight:bold;">T</span>
<svg style="left:731px;top:33.5px;" width="9" height="9" viewBox="0 0 9 9"><path d="M7.4 3.6 A3.1 3.1 0 0 0 1.6 3.4 M1.6 5.4 A3.1 3.1 0 0 0 7.4 5.6" fill="none" stroke="#d0d2d4" stroke-width="1"/><path d="M0.4 1.6 L1.2 4.2 L3.6 3.2 Z M8.6 7.4 L7.8 4.8 L5.4 5.8 Z" fill="#d0d2d4"/></svg>
<svg style="left:745px;top:33.5px;" width="9" height="9" viewBox="0 0 9 9"><path d="M0.6 1 H8.4 L5.4 4.6 V7.8 L3.6 6.8 V4.6 Z" fill="none" stroke="#d0d2d4" stroke-width="0.9"/><path d="M1.8 1 L3.4 3 M4.2 1 L5.2 2.4 M6.4 1 L6.8 1.6" stroke="#d0d2d4" stroke-width="0.6"/></svg>
<div style="left:757.6px;top:33.5px;width:0.7px;height:9.5px;background:#5a6673;"></div>
<svg style="left:763.2px;top:34.2px;" width="7.6" height="7.6" viewBox="0 0 9 9"><circle cx="4.5" cy="4.5" r="2.3" fill="none" stroke="#d0d0d0" stroke-width="1.6"/><rect x="3.8" y="0.4" width="1.4" height="1.8" fill="#d0d0d0" transform="rotate(0 4.5 4.5)"/><rect x="3.8" y="0.4" width="1.4" height="1.8" fill="#d0d0d0" transform="rotate(60 4.5 4.5)"/><rect x="3.8" y="0.4" width="1.4" height="1.8" fill="#d0d0d0" transform="rotate(120 4.5 4.5)"/><rect x="3.8" y="0.4" width="1.4" height="1.8" fill="#d0d0d0" transform="rotate(180 4.5 4.5)"/><rect x="3.8" y="0.4" width="1.4" height="1.8" fill="#d0d0d0" transform="rotate(240 4.5 4.5)"/><rect x="3.8" y="0.4" width="1.4" height="1.8" fill="#d0d0d0" transform="rotate(300 4.5 4.5)"/></svg>
<div style="left:778px;top:38px;width:6px;height:0.9px;background:#d0d2d4;"></div>
<span style="left:603.3px;top:48.60px;font-size:7.9px;color:#e6e6e6;line-height:12px;letter-spacing:0.003px;word-spacing:-0.003px;">entry : /pages...</span>
<div style="left:669.3px;top:47.7px;width:26.5px;height:11.9px;background:#2e3238;border-radius:1.5px;border:0.5px solid #454a52"></div>
<div style="left:682.4px;top:48px;width:0.5px;height:11.3px;background:#3a3f46;"></div>
<div style="left:699.7px;top:47.7px;width:26.8px;height:11.9px;background:#2e3238;border-radius:1.5px;border:0.5px solid #454a52"></div>
<svg style="left:671.2px;top:49.5px;" width="10" height="9" viewBox="0 0 10 9"><path d="M0.6 2.6 V0.8 H2.6 M7.4 0.8 H9.4 V2.6 M9.4 6.4 V8.2 H7.4 M2.6 8.2 H0.6 V6.4" fill="none" stroke="#2f8fe8" stroke-width="0.9"/><path d="M2 4.5 Q5 1.6 8 4.5 Q5 7.4 2 4.5 Z" fill="none" stroke="#2f8fe8" stroke-width="0.8"/><circle cx="5" cy="4.5" r="1" fill="#2f8fe8"/></svg>
<svg style="left:684.4px;top:49.8px;" width="9" height="9" viewBox="0 0 9 9"><path d="M4.5 0.8 L8.2 2.6 L4.5 4.4 L0.8 2.6 Z" fill="#9aa0a6"/><path d="M0.8 3.4 L4.5 5.2 L8.2 3.4 V6 L4.5 7.8 L0.8 6 Z" fill="#83898f"/></svg>
<div style="left:703.4px;top:50.6px;width:2.6px;height:2.6px;background:#a4a8ad;border-radius:0.6px"></div>
<div style="left:703.4px;top:54.2px;width:2.6px;height:2.6px;background:#a4a8ad;border-radius:0.6px"></div>
<div style="left:707.0px;top:50.6px;width:2.6px;height:2.6px;background:#a4a8ad;border-radius:0.6px"></div>
<div style="left:707.0px;top:54.2px;width:2.6px;height:2.6px;background:#a4a8ad;border-radius:0.6px"></div>
<svg style="left:717px;top:52.2px;" width="6" height="4" viewBox="0 0 6 4"><path d="M0.4 0.4 H5.6 L3 3.6 Z" fill="#b8bcc0"/></svg>
<svg style="left:730px;top:49.8px;" width="9" height="9" viewBox="0 0 9 9"><rect x="1.6" y="1.6" width="5.8" height="5.8" fill="none" stroke="#a4a8ad" stroke-width="0.8"/><path d="M1.6 0.2 V1.6 H0.2 M7.4 0.2 V1.6 H8.8 M1.6 8.8 V7.4 H0.2 M7.4 8.8 V7.4 H8.8" stroke="#a4a8ad" stroke-width="0.7" fill="none"/></svg>
<svg style="left:742.5px;top:49.8px;" width="9" height="9" viewBox="0 0 9 9"><circle cx="4" cy="4" r="3" fill="none" stroke="#8e9297" stroke-width="0.8"/><path d="M2.6 4 H5.4 M6.2 6.2 L8.4 8.4" stroke="#8e9297" stroke-width="0.8"/></svg>
<svg style="left:754px;top:49.8px;" width="9" height="9" viewBox="0 0 9 9"><circle cx="4" cy="4" r="3" fill="none" stroke="#a4a8ad" stroke-width="0.8"/><path d="M2.6 4 H5.4 M4 2.6 V5.4 M6.2 6.2 L8.4 8.4" stroke="#a4a8ad" stroke-width="0.8"/></svg>
<svg style="left:765.5px;top:49.8px;" width="9" height="9" viewBox="0 0 9 9"><rect x="1" y="1" width="7" height="7" rx="1" fill="none" stroke="#a4a8ad" stroke-width="0.8"/><path d="M2.4 6.6 L6.6 2.4 V6.6 Z" fill="#8e9297"/></svg>
<span style="left:777.3px;top:48.00px;font-size:7px;color:#a4a8ad;line-height:12px;letter-spacing:-0.244px;">1:1</span>
<svg style="left:647.4px;top:82.2px;" width="11" height="8" viewBox="0 0 11 8"><rect x="0.6" y="0.6" width="9.8" height="6.4" rx="0.8" fill="none" stroke="#2f8fe8" stroke-width="1"/><rect x="2" y="2" width="0.9" height="3.6" fill="#2f8fe8"/></svg>
<span style="left:662.7px;top:80.60px;font-size:8.1px;color:#f4f4f4;line-height:12px;letter-spacing:-0.221px;word-spacing:0.221px;">Phone (medium)</span>
<div style="left:658.7px;top:96.8px;width:64.3px;height:17.2px;background:#40444b;border-radius:1px"></div>
<div style="left:680.2px;top:96.8px;width:0.6px;height:17.2px;background:#34383f;"></div>
<div style="left:701.5px;top:96.8px;width:0.6px;height:17.2px;background:#34383f;"></div>
<svg style="left:663.2px;top:99.6px;" width="12" height="12" viewBox="0 0 12 12"><path d="M9.6 1.2 V10.8 L1.4 6 Z" fill="none" stroke="#9499a0" stroke-width="0.8"/></svg>
<svg style="left:686.5px;top:100.6px;" width="11" height="10" viewBox="0 0 11 10"><rect x="0.8" y="1.2" width="4.6" height="7.6" rx="0.8" fill="none" stroke="#9499a0" stroke-width="0.8"/><rect x="5.4" y="4.6" width="4.6" height="4.2" rx="0.8" fill="none" stroke="#9499a0" stroke-width="0.8"/><path d="M2.2 7.4 H3.8" stroke="#9499a0" stroke-width="0.6"/></svg>
<div style="left:708.6px;top:104.9px;width:1.5px;height:1.5px;background:#9499a0;border-radius:1px"></div>
<div style="left:711.9px;top:104.9px;width:1.5px;height:1.5px;background:#9499a0;border-radius:1px"></div>
<div style="left:715.2px;top:104.9px;width:1.5px;height:1.5px;background:#9499a0;border-radius:1px"></div>
<div style="left:765px;top:175.4px;width:4.2px;height:48px;background:#1b1b1c;border-radius:1.5px"></div>
<div style="left:765px;top:230px;width:4.2px;height:27px;background:#1b1b1c;border-radius:1.5px"></div>
<div style="left:615.4px;top:119.5px;width:150.7px;height:311.9px;border-radius:6px;background:#1b1b1c;overflow:hidden"><div style="left:60px;top:306.1px;width:90.7px;height:5.8px;border-bottom-right-radius:6px;background:linear-gradient(to bottom,#222 0%,#5a5a5a 45%,#8a8a8a 100%);-webkit-mask-image:linear-gradient(to right,transparent 0%,rgba(0,0,0,.5) 55%,#000 95%);mask-image:linear-gradient(to right,transparent 0%,rgba(0,0,0,.5) 55%,#000 95%)"></div><div style="left:145.1px;top:165px;width:5.6px;height:146.9px;border-bottom-right-radius:6px;background:linear-gradient(to right,#cfcfcf,#9a9a9a 35%,#4a4a4a 100%);-webkit-mask-image:linear-gradient(to bottom,transparent 0%,rgba(0,0,0,.45) 45%,#000 90%);mask-image:linear-gradient(to bottom,transparent 0%,rgba(0,0,0,.45) 45%,#000 90%)"></div><div style="left:5.1px;top:4.9px;width:140.8px;height:302px;border-radius:3.6px;background:#1b1b1c"></div></div>
<div id="scr" style="left:621.3px;top:125.2px;width:139.2px;height:300.4px;background:#fff;border-radius:3px;overflow:hidden;font-family:'Liberation Sans','Noto Sans CJK SC',sans-serif">
<div style="left:0.00px;top:15.70px;width:139.20px;height:25.80px;background:#6952e1;"></div>
<span style="top:22.00px;line-height:14px;font-size:9.3px;color:#fff;font-weight:bold;left:6.50px;">训练</span>
<svg style="left:122.5px;top:22.499999999999986px" width="11.6" height="11.6" viewBox="0 0 10 10"><path d="M4.6 1.2 A3.9 3.9 0 1 0 8.8 6.2 A3.4 3.4 0 0 1 4.6 1.2 Z" fill="none" stroke="#f1edff" stroke-width="0.95" stroke-linejoin="round"/></svg>
<div style="left:6.00px;top:48.10px;width:60.30px;height:38.00px;background:#fff;border:0.6px solid #f5f5f8;border-radius:4.5px;"></div>
<div style="left:72.90px;top:48.10px;width:60.20px;height:38.00px;background:#fff;border:0.6px solid #f5f5f8;border-radius:4.5px;"></div>
<span style="top:51.50px;line-height:14px;font-size:6.1px;color:#484848;left:13.70px;">今日训练时长</span>
<svg style="left:53.5px;top:55.8px" width="4" height="6" viewBox="0 0 4 6"><path d="M0.8 0.7 L3.2 3 L0.8 5.3" fill="none" stroke="#3a3a3a" stroke-width="0.9"/></svg>
<span style="top:67.20px;line-height:14px;font-size:9.4px;color:#6952e1;font-weight:bold;left:21.70px;">12分钟</span>
<span style="top:51.50px;line-height:14px;font-size:6.1px;color:#484848;left:80.00px;">燃烧卡路里</span>
<svg style="left:119.90000000000009px;top:55.8px" width="4" height="6" viewBox="0 0 4 6"><path d="M0.8 0.7 L3.2 3 L0.8 5.3" fill="none" stroke="#3a3a3a" stroke-width="0.9"/></svg>
<span style="top:67.20px;line-height:14px;font-size:9.4px;color:#6952e1;font-weight:bold;left:85.50px;">190千卡</span>
<div style="left:6.00px;top:91.90px;width:127.10px;height:62.20px;background:#fff;border:0.6px solid #f5f5f8;border-radius:4.5px;"></div>
<span style="top:95.80px;line-height:14px;font-size:7px;color:#1a1a1a;font-weight:bold;left:12.90px;">体重记录</span>
<span style="top:113.80px;line-height:14px;font-size:13.1px;color:#6952e1;font-weight:bold;left:12.90px;">55.5kg</span>
<span style="top:113.10px;line-height:14px;font-size:5.6px;color:#9a9a9a;left:59.20px;">已减12kg</span>
<div style="left:46.30px;top:133.70px;width:46.40px;height:13.60px;background:#6952e1;border-radius:7px"></div>
<span style="top:133.50px;line-height:14px;font-size:5.4px;color:#fff;font-weight:bold;left:39.50px;width:60px;text-align:center;">记录体重</span>
<div style="left:6.00px;top:160.20px;width:127.10px;height:125.00px;background:#fff;border:0.6px solid #f5f5f8;border-radius:4.5px;"></div>
<span style="top:163.80px;line-height:14px;font-size:7px;color:#1a1a1a;font-weight:bold;left:12.90px;">锻炼时长</span>
<span style="top:163.80px;line-height:14px;font-size:7.2px;color:#6952e1;font-weight:bold;left:100.20px;">102分钟</span>
<span style="top:177.20px;line-height:14px;font-size:5.2px;color:#555;left:-12.60px;width:60px;text-align:center;">一</span>
<div style="left:16.85px;top:187.40px;width:1.70px;height:13.20px;background:#f1effc;border-radius:1px"></div>
<div style="left:16.85px;top:191.00px;width:1.70px;height:6.00px;background:#6c56e6;border-radius:0.8px"></div>
<span style="top:198.80px;line-height:14px;font-size:4.7px;color:#666;left:-12.60px;width:60px;text-align:center;">15分</span>
<span style="top:177.20px;line-height:14px;font-size:5.2px;color:#555;left:4.70px;width:60px;text-align:center;">二</span>
<div style="left:33.85px;top:187.40px;width:1.70px;height:13.20px;background:#f1effc;border-radius:1px"></div>
<div style="left:33.85px;top:190.00px;width:1.70px;height:8.00px;background:#6c56e6;border-radius:0.8px"></div>
<span style="top:198.80px;line-height:14px;font-size:4.7px;color:#666;left:4.70px;width:60px;text-align:center;">20分</span>
<span style="top:177.20px;line-height:14px;font-size:5.2px;color:#555;left:22.00px;width:60px;text-align:center;">三</span>
<div style="left:50.85px;top:187.40px;width:1.70px;height:13.20px;background:#f1effc;border-radius:1px"></div>
<div style="left:50.85px;top:189.00px;width:1.70px;height:10.00px;background:#6c56e6;border-radius:0.8px"></div>
<span style="top:198.80px;line-height:14px;font-size:4.7px;color:#666;left:22.00px;width:60px;text-align:center;">25分</span>
<span style="top:177.20px;line-height:14px;font-size:5.2px;color:#555;left:39.30px;width:60px;text-align:center;">四</span>
<div style="left:68.85px;top:187.40px;width:1.70px;height:13.20px;background:#f1effc;border-radius:1px"></div>
<div style="left:68.85px;top:190.50px;width:1.70px;height:7.00px;background:#6c56e6;border-radius:0.8px"></div>
<span style="top:198.80px;line-height:14px;font-size:4.7px;color:#666;left:39.30px;width:60px;text-align:center;">18分</span>
<span style="top:177.20px;line-height:14px;font-size:5.2px;color:#555;left:56.60px;width:60px;text-align:center;">五</span>
<div style="left:85.85px;top:187.40px;width:1.70px;height:13.20px;background:#f1effc;border-radius:1px"></div>
<div style="left:85.85px;top:189.50px;width:1.70px;height:9.00px;background:#6c56e6;border-radius:0.8px"></div>
<span style="top:198.80px;line-height:14px;font-size:4.7px;color:#666;left:56.60px;width:60px;text-align:center;">22分</span>
<span style="top:177.20px;line-height:14px;font-size:5.2px;color:#555;left:73.90px;width:60px;text-align:center;">六</span>
<div style="left:102.85px;top:187.40px;width:1.70px;height:13.20px;background:#f1effc;border-radius:1px"></div>
<div style="left:102.85px;top:187.70px;width:1.70px;height:12.60px;background:#6c56e6;border-radius:0.8px"></div>
<span style="top:198.80px;line-height:14px;font-size:4.7px;color:#666;left:73.90px;width:60px;text-align:center;">30分</span>
<span style="top:177.20px;line-height:14px;font-size:5.2px;color:#555;left:91.20px;width:60px;text-align:center;">日</span>
<div style="left:120.85px;top:187.40px;width:1.70px;height:13.20px;background:#f1effc;border-radius:1px"></div>
<div style="left:120.85px;top:190.00px;width:1.70px;height:8.00px;background:#6c56e6;border-radius:0.8px"></div>
<span style="top:198.80px;line-height:14px;font-size:4.7px;color:#666;left:91.20px;width:60px;text-align:center;">20分</span>
<div style="left:12.20px;top:219.20px;width:114.50px;height:0.60px;background:#ececf0;"></div>
<span style="top:223.80px;line-height:14px;font-size:7px;color:#1a1a1a;font-weight:bold;left:13.00px;">卡路里</span>
<span style="top:223.80px;line-height:14px;font-size:7.2px;color:#6952e1;font-weight:bold;left:100.30px;">112千卡</span>
<span style="top:236.60px;line-height:14px;font-size:5.2px;color:#555;left:-8.80px;width:60px;text-align:center;">一</span>
<div style="left:20.85px;top:247.60px;width:1.70px;height:12.20px;background:#f1effc;border-radius:1px"></div>
<div style="left:20.85px;top:250.65px;width:1.70px;height:6.30px;background:#6c56e6;border-radius:0.8px"></div>
<span style="top:258.00px;line-height:14px;font-size:4.7px;color:#666;left:-8.80px;width:60px;text-align:center;">150千卡</span>
<span style="top:236.60px;line-height:14px;font-size:5.2px;color:#555;left:12.33px;width:60px;text-align:center;">二</span>
<div style="left:41.85px;top:247.60px;width:1.70px;height:12.20px;background:#f1effc;border-radius:1px"></div>
<div style="left:41.85px;top:249.70px;width:1.70px;height:8.20px;background:#6c56e6;border-radius:0.8px"></div>
<span style="top:258.00px;line-height:14px;font-size:4.7px;color:#666;left:12.33px;width:60px;text-align:center;">200千卡</span>
<span style="top:236.60px;line-height:14px;font-size:5.2px;color:#555;left:33.46px;width:60px;text-align:center;">三</span>
<div style="left:62.85px;top:247.60px;width:1.70px;height:12.20px;background:#f1effc;border-radius:1px"></div>
<div style="left:62.85px;top:249.00px;width:1.70px;height:9.60px;background:#6c56e6;border-radius:0.8px"></div>
<span style="top:258.00px;line-height:14px;font-size:4.7px;color:#666;left:33.46px;width:60px;text-align:center;">250千卡</span>
<span style="top:236.60px;line-height:14px;font-size:5.2px;color:#555;left:54.59px;width:60px;text-align:center;">四</span>
<div style="left:83.85px;top:247.60px;width:1.70px;height:12.20px;background:#f1effc;border-radius:1px"></div>
<div style="left:83.85px;top:250.30px;width:1.70px;height:7.00px;background:#6c56e6;border-radius:0.8px"></div>
<span style="top:258.00px;line-height:14px;font-size:4.7px;color:#666;left:54.59px;width:60px;text-align:center;">180千卡</span>
<span style="top:236.60px;line-height:14px;font-size:5.2px;color:#555;left:75.72px;width:60px;text-align:center;">五</span>
<div style="left:104.85px;top:247.60px;width:1.70px;height:12.20px;background:#f1effc;border-radius:1px"></div>
<div style="left:104.85px;top:249.55px;width:1.70px;height:8.50px;background:#6c56e6;border-radius:0.8px"></div>
<span style="top:258.00px;line-height:14px;font-size:4.7px;color:#666;left:75.72px;width:60px;text-align:center;">220千卡</span>
<span style="top:236.60px;line-height:14px;font-size:5.2px;color:#555;left:96.85px;width:60px;text-align:center;">六</span>
<div style="left:125.85px;top:247.60px;width:1.70px;height:12.20px;background:#f1effc;border-radius:1px"></div>
<div style="left:125.85px;top:248.30px;width:1.70px;height:11.00px;background:#6c56e6;border-radius:0.8px"></div>
<span style="top:258.00px;line-height:14px;font-size:4.7px;color:#666;left:96.85px;width:60px;text-align:center;">300千卡</span>
<div style="left:0.00px;top:268.40px;width:139.20px;height:32.00px;background:#fff;"></div>
<span style="top:277.30px;line-height:14px;font-size:6px;color:#8a8a8a;left:-12.60px;width:60px;text-align:center;">课程</span>
<span style="top:277.30px;line-height:14px;font-size:6px;color:#8a8a8a;left:22.00px;width:60px;text-align:center;">计划</span>
<span style="top:277.30px;line-height:14px;font-size:6px;color:#111;font-weight:bold;left:56.80px;width:60px;text-align:center;">训练</span>
<span style="top:277.30px;line-height:14px;font-size:6px;color:#8a8a8a;left:91.40px;width:60px;text-align:center;">我的</span>
<svg style="left:11.10px;top:269.50px" width="13" height="11" viewBox="0 0 13 11"><path d="M6.5 0.4 L12.7 5.6 H11 V10.6 H7.8 V7 H5.2 V10.6 H2 V5.6 H0.3 Z" fill="#737373"/></svg>
<svg style="left:47.50px;top:269.70px" width="9" height="11" viewBox="0 0 9 11"><rect x="0.8" y="1.6" width="7.4" height="8.8" rx="1" fill="none" stroke="#8a8a8a" stroke-width="0.8"/><path d="M2.6 0.6 V2.6 M4.5 0.6 V2.6 M6.4 0.6 V2.6 M2.4 4.6 H6.6 M2.4 6.4 H6.6 M2.4 8.2 H6.6" stroke="#8a8a8a" stroke-width="0.7"/></svg>
<svg style="left:82.50px;top:269.60px" width="9" height="11" viewBox="0 0 9 11"><circle cx="4.5" cy="6.5" r="3.6" fill="#141414"/><rect x="3.5" y="1" width="2" height="1.1" fill="#141414"/><rect x="4.1" y="1.8" width="0.8" height="1.4" fill="#141414"/><rect x="4.15" y="5" width="0.7" height="1.8" fill="#fff"/></svg>
<svg style="left:116.40px;top:269.70px" width="10" height="11" viewBox="0 0 10 11"><circle cx="5" cy="3.4" r="2.5" fill="none" stroke="#8a8a8a" stroke-width="0.8"/><path d="M1 10.2 V9 Q1 6.6 3.4 6.6 H6.6 Q9 6.6 9 9 V10.2 Z" fill="none" stroke="#8a8a8a" stroke-width="0.8"/></svg>
</div>
<svg style="left:790.6px;top:37.2px;" width="6.4" height="6.4" viewBox="0 0 8 8"><ellipse cx="4" cy="4" rx="3" ry="3.4" fill="none" stroke="#c9cdd0" stroke-width="0.8"/><path d="M1 4 H7 M1.6 2.2 H6.4 M1.6 5.8 H6.4" stroke="#c9cdd0" stroke-width="0.6"/></svg>
<span style="left:775.35px;top:57.95px;width:36.90px;line-height:12px;font-size:6.6px;color:#bbbbbb;letter-spacing:-0.047px;transform:rotate(90deg);transform-origin:50% 50%;">AppAnalyzer</span>
<svg style="left:790.6px;top:94.4px;" width="6.4" height="6.4" viewBox="0 0 8 8"><path d="M4 0.6 L7 2.3 V5.7 L4 7.4 L1 5.7 V2.3 Z" fill="none" stroke="#c9cdd0" stroke-width="0.8"/><circle cx="4" cy="4" r="1.1" fill="#c9cdd0"/></svg>
<span style="left:777.60px;top:113.4px;width:32.40px;line-height:12px;font-size:6.6px;color:#bbbbbb;letter-spacing:-0.110px;transform:rotate(90deg);transform-origin:50% 50%;">CodeGenie</span>
<svg style="left:790.6px;top:146.8px;" width="6.4" height="6.4" viewBox="0 0 8 8"><path d="M4 1 Q6.4 1 6.4 3.8 V5.4 L7.2 6.4 H0.8 L1.6 5.4 V3.8 Q1.6 1 4 1 Z M3.2 7 H4.8 V7.6 H3.2 Z" fill="#c9cdd0"/><circle cx="6.6" cy="1.4" r="1.2" fill="#3592c4"/></svg>
<span style="left:776.35px;top:167.14999999999998px;width:34.90px;line-height:12px;font-size:6.6px;color:#bbbbbb;letter-spacing:-0.081px;transform:rotate(90deg);transform-origin:50% 50%;">Notifications</span>
<div style="left:788.2px;top:197px;width:11.8px;height:45.5px;background:#2d2f30;"></div>
<svg style="left:790.6px;top:202.8px;" width="6.4" height="6.4" viewBox="0 0 8 8"><path d="M0.6 4 Q4 0.6 7.4 4 Q4 7.4 0.6 4 Z" fill="none" stroke="#d6d8da" stroke-width="0.8"/><circle cx="4" cy="4" r="1" fill="#d6d8da"/></svg>
<span style="left:780.45px;top:219.35px;width:26.70px;line-height:12px;font-size:6.4px;color:#f0f0f0;letter-spacing:-0.394px;transform:rotate(90deg);transform-origin:50% 50%;font-weight:bold;">Previewer</span>
<svg style="left:790.4px;top:379px;" width="7" height="8" viewBox="0 0 7 8"><rect x="1" y="0.6" width="5" height="6.8" rx="0.8" fill="none" stroke="#c9cdd0" stroke-width="0.8"/><path d="M2.6 6 H4.4" stroke="#c9cdd0" stroke-width="0.6"/></svg>
<span style="left:768.30px;top:411.5px;width:51.00px;line-height:12px;font-size:6.6px;color:#bbbbbb;letter-spacing:-0.404px;transform:rotate(90deg);transform-origin:50% 50%;">Device File Browser</span>
<div style="left:0px;top:451px;width:800px;height:12.2px;background:#3c3f41;"></div>
<div style="left:0px;top:450.8px;width:800px;height:0.7px;background:#323232;"></div>
<div style="left:0px;top:463px;width:800px;height:11px;background:#3c3f41;"></div>
<div style="left:0px;top:463px;width:800px;height:0.6px;background:#353739;"></div>
<svg style="left:17px;top:454.2px;" width="7" height="7" viewBox="0 0 7 7"><circle cx="2" cy="1.4" r="1" fill="#c4c8cb"/><circle cx="2" cy="5.8" r="1" fill="#c4c8cb"/><circle cx="5.4" cy="2.4" r="1" fill="#c4c8cb"/><path d="M2 1.4 V5.8 M5.4 2.4 Q5.4 4.2 2 4.4" stroke="#c4c8cb" stroke-width="0.7" fill="none"/></svg>
<span style="left:25.5px;top:451.80px;font-size:7.3px;color:#bbbbbb;line-height:12px;letter-spacing:-0.609px;">Git</span>
<svg style="left:46.5px;top:454.2px;" width="7" height="7" viewBox="0 0 7 7"><path d="M0.6 0.4 V6.4 H6.8" stroke="#c4c8cb" stroke-width="0.8" fill="none"/><path d="M1.6 5 L3 2.8 L4.4 4 L6.4 1.2" stroke="#c4c8cb" stroke-width="0.8" fill="none"/></svg>
<span style="left:56.4px;top:451.80px;font-size:7.3px;color:#bbbbbb;line-height:12px;letter-spacing:-0.576px;word-spacing:0.576px;">Operation Analyzer</span>
<svg style="left:123px;top:454.2px;" width="7" height="7" viewBox="0 0 7 7"><path d="M0.4 2.4 L6.6 0.6 L4.6 6.6 L3.2 4 Z" fill="#c4c8cb"/><path d="M1.4 6.4 L3 4.6" stroke="#c4c8cb" stroke-width="0.7"/></svg>
<span style="left:133px;top:451.80px;font-size:7.3px;color:#bbbbbb;line-height:12px;letter-spacing:-0.490px;">Profiler</span>
<svg style="left:162px;top:454.2px;" width="7" height="7" viewBox="0 0 7 7"><path d="M0.6 2.2 L2.6 0.4 L4.4 0.8 L3.6 1.8 L6.6 5.4 L5.6 6.4 L2.4 3 L1.4 3.6 Z" fill="#c4c8cb"/></svg>
<span style="left:171.7px;top:451.80px;font-size:7.3px;color:#bbbbbb;line-height:12px;letter-spacing:-0.667px;">Build</span>
<svg style="left:195.5px;top:454.2px;" width="7" height="7" viewBox="0 0 7 7"><path d="M0.4 1.4 H1.4 M0.4 3.5 H1.4 M0.4 5.6 H1.4" stroke="#c4c8cb" stroke-width="0.9"/><path d="M2.4 1.4 H6.6 M2.4 3.5 H6.6 M2.4 5.6 H6.6" stroke="#c4c8cb" stroke-width="0.9"/></svg>
<span style="left:204.7px;top:451.80px;font-size:7.3px;color:#bbbbbb;line-height:12px;letter-spacing:-1.114px;">TODO</span>
<svg style="left:230px;top:454.2px;" width="7" height="7" viewBox="0 0 7 7"><rect x="0.5" y="0.5" width="6" height="6" rx="0.6" fill="#c4c8cb"/><path d="M1.6 2 H5.4 M1.6 3.5 H5.4 M1.6 5 H4" stroke="#3c3f41" stroke-width="0.7"/></svg>
<span style="left:239.6px;top:451.80px;font-size:7.3px;color:#bbbbbb;line-height:12px;letter-spacing:-0.760px;">Log</span>
<svg style="left:260.5px;top:454.2px;" width="7" height="7" viewBox="0 0 7 7"><circle cx="3.5" cy="3.5" r="3" fill="#c4c8cb"/><path d="M3.5 1.6 V4" stroke="#3c3f41" stroke-width="0.9"/><circle cx="3.5" cy="5.1" r="0.5" fill="#3c3f41"/></svg>
<span style="left:270px;top:451.80px;font-size:7.3px;color:#bbbbbb;line-height:12px;letter-spacing:-0.704px;">Problems</span>
<svg style="left:306px;top:454.2px;" width="7" height="7" viewBox="0 0 7 7"><rect x="0.4" y="0.6" width="6.2" height="5.8" rx="0.5" fill="#c4c8cb"/><path d="M1.4 2 L2.8 3.2 L1.4 4.4 M3.4 4.8 H5.4" stroke="#3c3f41" stroke-width="0.7" fill="none"/></svg>
<span style="left:315px;top:451.80px;font-size:7.3px;color:#bbbbbb;line-height:12px;letter-spacing:-0.486px;">Terminal</span>
<svg style="left:350px;top:454.2px;" width="7" height="7" viewBox="0 0 7 7"><circle cx="3.5" cy="3.5" r="3.1" fill="#c4c8cb"/><path d="M2.6 2 L5.2 3.5 L2.6 5 Z" fill="#3c3f41"/></svg>
<span style="left:359.2px;top:451.80px;font-size:7.3px;color:#bbbbbb;line-height:12px;letter-spacing:-0.836px;">Services</span>
<svg style="left:391.3px;top:454.2px;" width="7" height="7" viewBox="0 0 7 7"><circle cx="3" cy="3" r="2.3" fill="none" stroke="#c4c8cb" stroke-width="1"/><path d="M4.6 4.6 L6.6 6.6" stroke="#c4c8cb" stroke-width="1.1"/><circle cx="3" cy="3" r="0.8" fill="#c4c8cb"/></svg>
<span style="left:400.6px;top:451.80px;font-size:7.3px;color:#bbbbbb;line-height:12px;letter-spacing:-0.654px;word-spacing:0.654px;">Code Linter</span>
<svg style="left:443.3px;top:454.2px;" width="7" height="7" viewBox="0 0 7 7"><rect x="0.6" y="0.6" width="5.8" height="5.8" rx="0.6" fill="none" stroke="#8e9295" stroke-width="0.7"/><path d="M1.8 2.4 H5.2 M1.8 3.6 H5.2 M1.8 4.8 H4" stroke="#8e9295" stroke-width="0.5"/></svg>
<span style="left:453px;top:451.80px;font-size:7.3px;color:#bbbbbb;line-height:12px;letter-spacing:-0.678px;">PreviewerLog</span>
<svg style="left:5.5px;top:465.2px;" width="8" height="7" viewBox="0 0 8 7"><rect x="0.5" y="1.6" width="5" height="5" fill="none" stroke="#a8acaf" stroke-width="0.7"/><path d="M2 1.6 V0.5 H7.4 V5 H5.5" fill="none" stroke="#a8acaf" stroke-width="0.7"/></svg>
<span style="left:20.4px;top:462.80px;font-size:7.3px;color:#bbbbbb;line-height:12px;letter-spacing:-0.217px;word-spacing:0.217px;">Sync project finished in 3 s 857 ms (a minute ago)</span>
<svg style="left:597px;top:465.2px;" width="8" height="8" viewBox="0 0 8 8"><path d="M5.8 1.6 A2.8 2.8 0 1 0 6.6 4.6" fill="none" stroke="#a8acaf" stroke-width="0.8"/><path d="M1.2 1 L6.6 7" stroke="#a8acaf" stroke-width="0.7"/><path d="M3.8 1 V3.6" stroke="#a8acaf" stroke-width="0.8"/></svg>
<div style="left:610.3px;top:465.6px;width:6.4px;height:6.4px;background:#2bb32b;border-radius:4px"></div>
<span style="left:622.5px;top:462.80px;font-size:7.3px;color:#bbbbbb;line-height:12px;letter-spacing:-0.177px;">3:38</span>
<span style="left:642.8px;top:462.80px;font-size:7.3px;color:#bbbbbb;line-height:12px;letter-spacing:-1.016px;">CRLF</span>
<span style="left:664.5px;top:462.80px;font-size:7.3px;color:#bbbbbb;line-height:12px;letter-spacing:-0.336px;">UTF-8</span>
<span style="left:690.3px;top:462.80px;font-size:7.3px;color:#bbbbbb;line-height:12px;letter-spacing:-0.503px;word-spacing:0.503px;">2 spaces</span>
<svg style="left:722.5px;top:465.2px;" width="8" height="7" viewBox="0 0 8 7"><path d="M4 0.5 L7.6 6.5 H0.4 Z" fill="#e2a53a"/><path d="M4 2.6 V4.6" stroke="#3c3f41" stroke-width="0.8"/><circle cx="4" cy="5.5" r="0.4" fill="#3c3f41"/></svg>
<span style="left:731.8px;top:462.80px;font-size:7.3px;color:#bbbbbb;line-height:12px;letter-spacing:-0.116px;word-spacing:0.116px;">Merging master</span>
<svg style="left:785.5px;top:464.8px;" width="7" height="8" viewBox="0 0 7 8"><rect x="0.8" y="3.4" width="4.4" height="3.8" fill="#b0b4b7"/><path d="M3.8 3.4 V2.2 A1.4 1.4 0 0 1 6.6 2.2 V3" fill="none" stroke="#b0b4b7" stroke-width="0.8"/></svg>
</div>
</body></html>
